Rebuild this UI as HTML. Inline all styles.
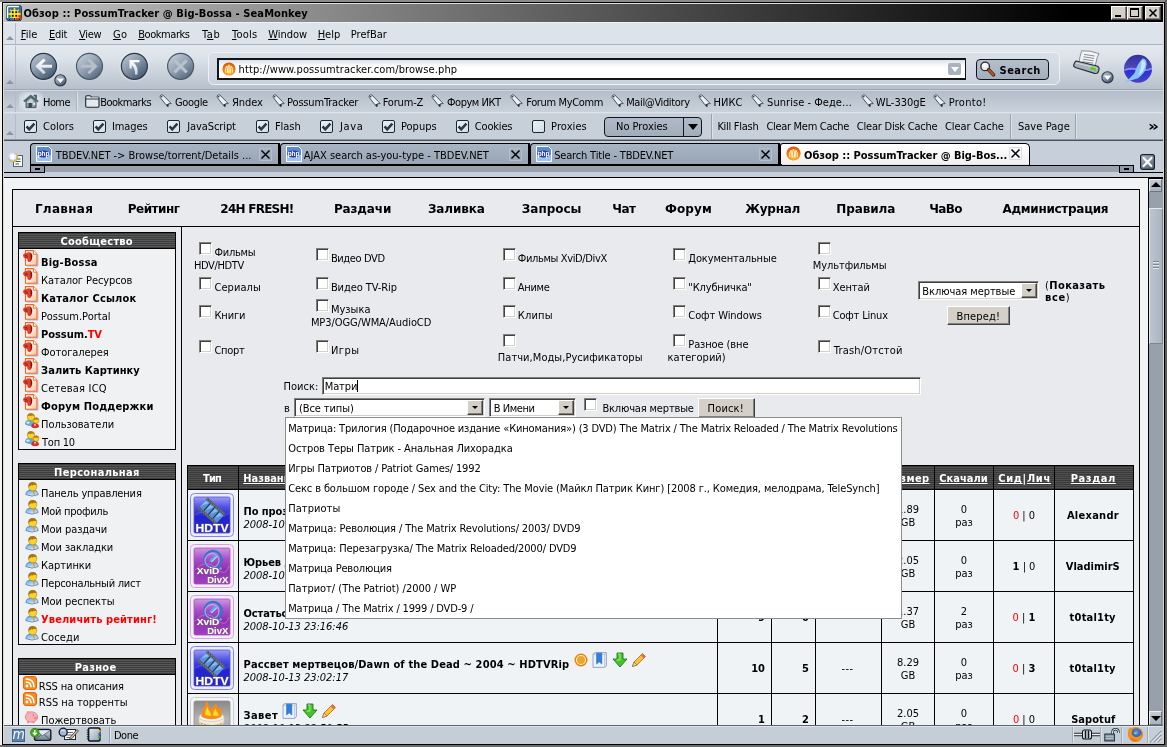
<!DOCTYPE html>
<html lang="ru">
<head>
<meta charset="utf-8">
<title>Обзор :: PossumTracker @ Big-Bossa - SeaMonkey</title>
<style>
html,body{margin:0;padding:0;}
body{width:1167px;height:747px;overflow:hidden;background:#d4d0c8;position:relative;
 font-family:"DejaVu Sans Condensed","Liberation Sans",sans-serif;font-size:11px;color:#000;}
.abs{position:absolute;}
#win{position:absolute;left:0;top:0;width:1167px;height:747px;overflow:hidden;will-change:transform;}
/* chrome font (Tahoma-like) */
.ui{font-family:"DejaVu Sans Condensed","Liberation Sans",sans-serif;font-size:11px;white-space:nowrap;}
/* page font (Verdana-like) */
.pg{font-family:"DejaVu Sans","Liberation Sans",sans-serif;font-size:11px;}
u{text-decoration:underline;}
*{text-decoration-skip-ink:none;}
/* ---- frame ---- */
#frameTop{left:0;top:0;width:1167px;height:2px;background:#8c8c8c;}
#frameTop2{left:2px;top:2px;width:1163px;height:1px;background:#000;}
#frameL0{left:0;top:2px;width:2px;height:745px;background:#f4f2ee;}
#frameL1{left:2px;top:2px;width:1px;height:745px;background:#000;}
#frameL2{left:3px;top:3px;width:1px;height:741px;background:#dcd8d0;}
#frameR0{left:1163px;top:3px;width:1px;height:742px;background:#dcd8d0;}
#frameR1{left:1164px;top:2px;width:1px;height:745px;background:#000;}
#frameR2{left:1165px;top:0;width:2px;height:747px;background:#5c5c5c;}
#frameB0{left:3px;top:744px;width:1162px;height:1px;background:#000;}
#frameB1{left:0;top:745px;width:1167px;height:2px;background:#6c6c6c;}
#titleHi{left:3px;top:3px;width:1161px;height:1px;background:#e4e0d8;}
#title{left:4px;top:4px;width:1159px;height:18px;background:linear-gradient(to right,#c0c0c0 0,#b4b4b4 8%,#000 92%,#000 100%);}
#titleText{left:23.5px;top:6px;letter-spacing:0.09px;font-weight:bold;font-size:11px;line-height:16px;font-family:"DejaVu Sans Condensed","Liberation Sans",sans-serif;}
.wbtn{width:16px;height:14px;top:6px;background:#d4d0c8;box-sizing:border-box;border:1px solid;border-color:#fff #404040 #404040 #fff;box-shadow:inset -1px -1px 0 #808080;}
#menubar{left:4px;top:22px;width:1159px;height:21px;background:#dde3ea;border-top:1px solid #eef2f6;border-bottom:1px solid #a9b3bf;box-sizing:content-box;}
.mi{top:28px;line-height:14px;height:14px;}
.grip{left:4px;width:11px;border-right:1px solid #b4bcc8;}
.grip i{position:absolute;left:2px;width:0;height:0;border-left:4px solid transparent;border-right:4px solid transparent;border-bottom:4px solid #8c96a2;}
#navbar{left:4px;top:45px;width:1159px;height:44px;background:linear-gradient(to bottom,#e4e9ef 0,#dce2e9 30%,#c4ccd6 75%,#b6c0cb 100%);border-bottom:1px solid #9ea8b4;}
#urlbox{left:217px;top:58px;width:749px;height:22px;box-sizing:border-box;border:2px solid #141414;border-right-width:1px;background:linear-gradient(to bottom,#d8e2ec 0,#f4f7fa 25%,#fff 45%,#fff 100%);}
#searchbtn{left:976px;top:59px;width:73px;height:21px;box-sizing:border-box;border:1px solid #10141a;border-radius:4px;background:linear-gradient(to bottom,#b4becb,#a4afbd);}
#bmbar{left:4px;top:90px;width:1159px;height:23px;background:linear-gradient(to bottom,#b3beca 0,#bcc6d1 40%,#c9d1da 100%);border-top:1px solid #d0d7df;border-bottom:1px solid #dde3ea;box-sizing:border-box;}
.bt{top:96px;line-height:14px;}
#prefbar{left:4px;top:113px;width:1159px;height:27px;background:#c7cfd9;border-top:1px solid #cfd6df;border-bottom:1px solid #8a96a4;box-sizing:border-box;}
.pt{top:120px;line-height:14px;}
.pcb{top:120px;width:13px;height:13px;box-sizing:border-box;border:1px solid #1c2630;border-radius:2px;background:linear-gradient(135deg,#e6f0f4,#d2e0e8);}
.pcb svg{position:absolute;left:0;top:0;}
#noprox{left:604px;top:117px;width:98px;height:20px;box-sizing:border-box;border:1px solid #10161e;border-radius:4px;background:linear-gradient(to bottom,#b0bac8,#a2adbc);}
#noprox div{position:absolute;left:78px;top:0;width:1px;height:18px;background:#10161e;}
#noprox i{position:absolute;left:83px;top:6px;border-left:5px solid transparent;border-right:5px solid transparent;border-top:6px solid #000;}
#tabbar{left:4px;top:141px;width:1159px;height:36px;background:#c7cfda;}
.tab{top:143px;height:21px;box-sizing:border-box;border:1px solid #000;border-right-width:2px;border-bottom:0;border-radius:4px 0 0 0;background:linear-gradient(to bottom,#a8b4c2,#98a5b5);}
.tab.act{background:linear-gradient(to bottom,#fff,#f0f0f0);border-radius:3px 5px 0 0;border-right-width:1px;}
.tt{top:149px;line-height:14px;}
.tclose{top:148px;width:13px;height:13px;box-sizing:border-box;border:1px solid #b4bfcc;border-radius:1px;}
.tclose svg{position:absolute;left:0;top:0;}
.tdd{top:166px;width:15px;height:6px;box-sizing:border-box;border-left:1px solid #000;border-right:1px solid #000;background:#8c9aac;}
.tdd i{position:absolute;left:4px;top:2px;width:5px;height:2px;background:#000;}
.t{font-family:"DejaVu Sans Condensed","Liberation Sans",sans-serif;font-size:11px;line-height:14px;white-space:nowrap;}
.sbh{width:158px;height:16px;box-sizing:border-box;border:1px solid #000;border-bottom:0;background:repeating-linear-gradient(to bottom,#3c3c3c 0,#3c3c3c 1px,#585858 1px,#585858 2px);}
.sbb{width:158px;box-sizing:border-box;border:1px solid #000;background:#f0f1f3;}
.cb{width:13px;height:13px;box-sizing:border-box;border:1px solid;border-color:#808080 #fff #fff #808080;background:#fff;box-shadow:inset 1px 1px 0 #404040,inset -1px -1px 0 #d4d0c8;}
.sel{box-sizing:border-box;border:1px solid;border-color:#808080 #fff #fff #808080;background:#fff;box-shadow:inset 1px 1px 0 #404040,inset -1px -1px 0 #d4d0c8;}
.sel b{position:absolute;right:1px;top:1px;width:16px;height:15px;box-sizing:border-box;background:#d4d0c8;border:1px solid;border-color:#fff #404040 #404040 #fff;box-shadow:inset -1px -1px 0 #808080;}
.sel b:after{content:"";position:absolute;left:4px;top:5px;border-left:3px solid transparent;border-right:3px solid transparent;border-top:3px solid #000;}
.btn{box-sizing:border-box;background:#d4d0c8;border:1px solid;border-color:#fff #404040 #404040 #fff;box-shadow:inset -1px -1px 0 #808080;}
.inp{box-sizing:border-box;border:1px solid;border-color:#808080 #fff #fff #808080;background:#fff;box-shadow:inset 1px 1px 0 #404040,inset -1px -1px 0 #d4d0c8;}
.thd{background:repeating-linear-gradient(to bottom,#3a3a3a 0,#3a3a3a 1px,#505050 1px,#505050 2px);}
.sbtn{width:13px;height:13px;box-sizing:border-box;border:1px solid;border-color:#e8ecf0 #6c7682 #6c7682 #e8ecf0;background:linear-gradient(to bottom,#c4ccd6,#a8b2be);}
.sbtn i{position:absolute;left:1px;width:0;height:0;border-left:5px solid transparent;border-right:5px solid transparent;}
.sbtn i.up{top:2px;border-bottom:5px solid #000;}
.sbtn i.dn{top:4px;border-top:5px solid #000;}
#statusbar{left:4px;top:726px;width:1159px;height:18px;background:#c5cdd7;border-top:1px solid #dde4eb;box-sizing:border-box;}
.vs{top:727px;width:1px;height:16px;background:#a2acb8;border-right:1px solid #dde3ea;}

</style>
</head>
<body>
<div id="win">
<!-- window frame -->
<div class="abs" id="frameTop"></div>
<div class="abs" id="frameL0"></div>
<div class="abs" id="frameTop2"></div>
<div class="abs" id="frameL1"></div>
<div class="abs" id="frameL2"></div>
<div class="abs" id="frameR0"></div>
<div class="abs" id="frameR1"></div>
<div class="abs" id="frameR2"></div>
<div class="abs" id="titleHi"></div>
<div class="abs" id="title"></div>
<div class="abs ui" id="titleText">Обзор :: PossumTracker @ Big-Bossa - SeaMonkey</div>
<svg class="abs" style="left:6px;top:5px" width="16" height="16" viewBox="0 0 16 16">
 <rect x="0.5" y="0.5" width="15" height="15" rx="2" fill="#3a6ea0" stroke="#1c4a70"/>
 <path d="M1.5 13 V3 Q1.5 1.5 3 1.5 H13" fill="none" stroke="#fff" stroke-width="1.4"/>
 <rect x="8" y="7" width="7" height="8" fill="#e03c10"/>
 <circle cx="8.5" cy="9" r="4.2" fill="#ffee20"/>
 <path d="M8.5 3 V15 M2.5 9 H14.5 M4.2 4.7 L12.8 13.3 M12.8 4.7 L4.2 13.3" stroke="#ffe820" stroke-width="1.3"/>
 <path d="M5.8 6.2h2v2h-2zM9.2 6.2h2v2h-2zM5.8 9.8h2v2h-2zM9.2 9.8h2v2h-2z" fill="#181000"/><path d="M8.5 3 V15 M2.5 9 H14.5" stroke="#ffee20" stroke-width="1.2"/><path d="M12.5 13.5 L14.5 15.5 M4.5 13.5 L2.5 15.5 M8.5 13 V15.5" stroke="#100800" stroke-width="0.9"/>
</svg>
<div class="abs wbtn" style="left:1111px"><div class="abs" style="left:3px;top:8px;width:6px;height:2px;background:#000"></div></div>
<div class="abs wbtn" style="left:1127px"><div class="abs" style="left:2px;top:1px;width:9px;height:9px;box-sizing:border-box;border:1px solid #000;border-top-width:2px"></div></div>
<div class="abs wbtn" style="left:1145px"><svg class="abs" style="left:2px;top:1px" width="10" height="10" viewBox="0 0 10 10"><path d="M1.5 1.5 L8.5 8.5 M8.5 1.5 L1.5 8.5" stroke="#000" stroke-width="1.6"/></svg></div>

<div class="abs" id="menubar"></div>
<div class="abs grip" style="top:23px;height:21px"><i style="top:13px"></i></div>
<div class="abs ui mi" style="left:20.8px;letter-spacing:0.0px"><u>F</u>ile</div>
<div class="abs ui mi" style="left:49.1px;letter-spacing:-0.33px"><u>E</u>dit</div>
<div class="abs ui mi" style="left:79.1px;letter-spacing:-0.36px"><u>V</u>iew</div>
<div class="abs ui mi" style="left:113.0px;letter-spacing:0.23px"><u>G</u>o</div>
<div class="abs ui mi" style="left:138.2px;letter-spacing:-0.44px"><u>B</u>ookmarks</div>
<div class="abs ui mi" style="left:202.1px;letter-spacing:0.51px">T<u>a</u>b</div>
<div class="abs ui mi" style="left:232.1px;letter-spacing:0.22px"><u>T</u>ools</div>
<div class="abs ui mi" style="left:268.2px;letter-spacing:-0.04px"><u>W</u>indow</div>
<div class="abs ui mi" style="left:317.7px;letter-spacing:-0.03px"><u>H</u>elp</div>
<div class="abs ui mi" style="left:350.8px;letter-spacing:-0.0px">PrefBar</div>

<div class="abs" id="navbar"></div>
<div class="abs grip" style="top:46px;height:43px"><i style="top:34px"></i></div>
<svg class="abs" style="left:16px;top:45px" width="1146" height="45" viewBox="16 45 1146 45">
 <defs>
  <linearGradient id="gb" x1="0.15" y1="0.1" x2="0.85" y2="0.95"><stop offset="0" stop-color="#b4bfcc"/><stop offset="0.45" stop-color="#8494a8"/><stop offset="1" stop-color="#40546c"/></linearGradient>
  <linearGradient id="gbd" x1="0.15" y1="0.1" x2="0.85" y2="0.95"><stop offset="0" stop-color="#c0cad5"/><stop offset="0.45" stop-color="#94a2b3"/><stop offset="1" stop-color="#52667e"/></linearGradient>
  <radialGradient id="glow"><stop offset="0.6" stop-color="#e8edf3" stop-opacity="0.9"/><stop offset="1" stop-color="#e8edf3" stop-opacity="0"/></radialGradient>
  <linearGradient id="arw" x1="0" y1="0" x2="0" y2="1"><stop offset="0" stop-color="#fff"/><stop offset="1" stop-color="#d0d8e2"/></linearGradient>
  <linearGradient id="sm" x1="0" y1="0" x2="0" y2="1"><stop offset="0" stop-color="#34309c"/><stop offset="0.46" stop-color="#4c48bc"/><stop offset="0.54" stop-color="#2c2cd8"/><stop offset="1" stop-color="#4844c4"/></linearGradient>
 </defs>
 <!-- back -->
 <circle cx="43.5" cy="66.3" r="16.5" fill="url(#glow)"/>
 <circle cx="43.5" cy="66.3" r="13" fill="url(#gb)" stroke="#2c3846" stroke-width="1.2"/>
 <path d="M50.5 66.3 H39 M43.5 60.5 L37.5 66.3 L43.5 72.2" fill="none" stroke="url(#arw)" stroke-width="3" stroke-linecap="square" stroke-linejoin="miter"/>
 <circle cx="60.4" cy="80.3" r="5.6" fill="url(#gb)" stroke="#2c3846" stroke-width="1.1"/>
 <path d="M56.6 78.4 H64.2 L60.4 83 Z" fill="#fff"/>
 <!-- forward (disabled) -->
 <circle cx="89.5" cy="66.3" r="13" fill="url(#gbd)" stroke="#4a5868" stroke-width="1.2"/>
 <path d="M82.5 66.3 H94 M89.5 60.5 L95.5 66.3 L89.5 72.2" fill="none" stroke="#b4bfcb" stroke-width="3" stroke-linecap="square"/>
 <!-- reload -->
 <circle cx="134.4" cy="66.3" r="16.5" fill="url(#glow)"/>
 <circle cx="134.4" cy="66.3" r="13" fill="url(#gb)" stroke="#2c3846" stroke-width="1.2"/>
 <path d="M129.5 68.5 V60 H139.5 V62.2 H133.5 Q138.5 67 137.5 74.5 H135 Q135.5 69 131.8 65 V68.5 Z" fill="url(#arw)"/>
 <!-- stop (disabled) -->
 <circle cx="180.6" cy="66.3" r="13" fill="url(#gbd)" stroke="#4a5868" stroke-width="1.2"/>
 <path d="M174.5 60.2 L186.7 72.4 M186.7 60.2 L174.5 72.4" stroke="#b8c2cd" stroke-width="3"/>
 <!-- url container -->
 <rect x="208.5" y="52.5" width="851" height="32" rx="5" fill="#d4dbe4" fill-opacity="0.55" stroke="#eef1f5" stroke-width="1"/>
 <!-- printer -->
 <path d="M1081.6 50.8 Q1090 50.2 1099 53.6 Q1096.6 57.6 1096.2 62 L1094.8 67 L1079 63.6 Q1079.6 56.6 1081.6 50.8Z" fill="#f2f4f6" stroke="#7c848c" stroke-width="0.9"/>
 <path d="M1084 54.4 L1094.6 56 M1083.4 56.8 L1094 58.4 M1082.8 59.2 L1093.6 60.8 M1082.4 61.6 L1093.2 63.2" stroke="#6c747c" stroke-width="0.8"/>
 <path d="M1077.4 61.2 L1097 66 Q1099.6 67 1099 69.6 L1098 72.4 Q1097 74 1094.6 73.4 L1075.4 67.6 Q1073 66.4 1073.8 64.4 L1075 62 Q1075.8 60.8 1077.4 61.2Z" fill="#a8b0ba" stroke="#262e38" stroke-width="1.1"/>
 <path d="M1076 63 L1097.6 68.4" stroke="#d4dae0" stroke-width="1"/>
 <rect x="1090.6" y="67.2" width="5.4" height="2.8" fill="#58d020" transform="rotate(14 1093 68.5)"/>
 <circle cx="1107.5" cy="77.3" r="5.6" fill="url(#gb)" stroke="#2c3846" stroke-width="1.1"/>
 <path d="M1103.7 75.4 H1111.3 L1107.5 80 Z" fill="#fff"/>
 <!-- throbber -->
 <circle cx="1138" cy="68.8" r="14" fill="url(#sm)"/>
 <path d="M1124.4 69 Q1131 66.6 1138 68.4 Q1146 70.4 1152 67.6 L1152 69.6 Q1146 72.4 1138 70.4 Q1131 68.6 1124.4 71Z" fill="#8c94f4" opacity="0.9"/>
 <path d="M1124 82.4 Q1130.4 78.6 1134.6 73 Q1137.6 63.4 1142.6 58.6 Q1146.8 58.4 1146.6 64.6 Q1145.8 73.4 1138 78.2 Q1131.6 80.2 1124 82.4Z" fill="#86c4f8"/>
 <path d="M1141.6 60.4 Q1145.2 59.6 1145.4 64.2 Q1144.4 71 1138.6 75.6 Q1141.8 68 1141.6 60.4Z" fill="#c8e6ff"/>
</svg>
<div class="abs" id="urlbox"></div>
<svg class="abs" style="left:222px;top:62px" width="14" height="14" viewBox="0 0 14 14">
 <defs><radialGradient id="fav" cx="0.5" cy="0.7" r="0.7"><stop offset="0" stop-color="#ffd040"/><stop offset="0.6" stop-color="#f88010"/><stop offset="1" stop-color="#e04800"/></radialGradient></defs>
 <circle cx="7" cy="7" r="6.6" fill="url(#fav)"/>
 <path d="M3.5 10.5 Q3 5.5 4.8 4 Q5.3 6 5.6 10.5 M5.9 10.8 Q5.8 4 7 2.8 Q8.2 4 8.1 10.8 M8.4 10.5 Q8.7 6 9.2 4 Q11 5.5 10.5 10.5" fill="none" stroke="#fff4d0" stroke-width="0.9"/>
</svg>
<div class="abs ui" style="left:238.6px;top:63px;line-height:14px;letter-spacing:0.11px">http://www.possumtracker.com/browse.php</div>
<div class="abs" style="left:948px;top:63px;width:13px;height:12px;background:#a9b3c0;border-radius:2px"><i class="abs" style="left:3px;top:4px;border-left:4px solid transparent;border-right:4px solid transparent;border-top:5px solid #fff"></i></div>
<div class="abs" id="searchbtn"></div>
<svg class="abs" style="left:979px;top:60px" width="18" height="18" viewBox="0 0 18 18">
 <circle cx="6.2" cy="6.4" r="4.3" fill="#e8ecf0" stroke="#2a2a2a" stroke-width="1.3"/>
 <circle cx="5.4" cy="5.6" r="2" fill="#fff"/>
 <path d="M9.6 9.8 L14.5 14.8" stroke="#2a2a2a" stroke-width="3.6" stroke-linecap="round"/>
 <path d="M10 10.2 L14.4 14.6" stroke="#c85010" stroke-width="2.2" stroke-linecap="round"/>
</svg>
<div class="abs ui" style="left:999.5px;top:64px;line-height:14px;font-weight:bold;letter-spacing:0.5px">Search</div>

<div class="abs" id="bmbar"></div>
<div class="abs grip" style="top:91px;height:21px"><i style="top:13px"></i></div>
<div class="abs" style="left:19px;top:92px;width:24px;height:19px;border-radius:4px;background:radial-gradient(ellipse at center,#dfe5ec 0,#dfe5ec 40%,rgba(223,229,236,0) 100%)"></div>
<svg class="abs" style="left:23px;top:94px" width="17" height="15" viewBox="0 0 17 15"><path d="M10.6 1.6 H13 V5.4" fill="none" stroke="#4a5c64" stroke-width="1.8"/><path d="M0.8 7.6 L7.8 1.8 L15.2 7.8" fill="none" stroke="#566a72" stroke-width="2"/><path d="M3 7 L7.8 3 L13 7.2 V13.6 H3Z" fill="#8a9ea6" stroke="#3c4e56" stroke-width="0.9"/><path d="M4 8 L7.8 4.6 L10 6.6 V9 H4Z" fill="#c8d4d8"/><rect x="5.6" y="9" width="3.2" height="4.6" fill="#34464e"/><rect x="10" y="8.6" width="2.2" height="2.4" fill="#d8e4e8"/></svg>
<div class="abs" style="left:76px;top:92px;width:1px;height:19px;background:#aab2be;border-right:1px solid #dde3ea"></div>
<svg class="abs" style="left:85px;top:95px" width="15" height="13" viewBox="0 0 15 13"><path d="M0.7 2.2 Q0.7 0.7 2 0.7 H5.2 L6.4 2 H13 Q14 2 14 3 V11 Q14 12.2 13 12.2 H2 Q0.7 12.2 0.7 11Z" fill="#e4e9ee" stroke="#1c2430" stroke-width="1.1"/><path d="M1 4 H14" stroke="#1c2430" stroke-width="0.9"/><path d="M6.6 2.2 H13.6" stroke="#fff" stroke-width="0.6"/></svg>
<svg class="abs" style="left:158.9px;top:94px" width="14" height="14" viewBox="0 0 14 14"><path d="M1.2 3.4 V1.8 L2.2 1 H3.8 L10.4 7.6 L12.2 9.6 L9.4 9.8 L9 12.8 L6.8 10.6 L1.2 3.4Z" fill="#eceff3" stroke="#38424e" stroke-width="0.9" stroke-linejoin="round"/><path d="M9.4 9.8 L9 12.8 L7 10.8Z" fill="#1c2630"/><circle cx="2.8" cy="2.8" r="0.7" fill="#10161e"/></svg>
<svg class="abs" style="left:215.9px;top:94px" width="14" height="14" viewBox="0 0 14 14"><path d="M1.2 3.4 V1.8 L2.2 1 H3.8 L10.4 7.6 L12.2 9.6 L9.4 9.8 L9 12.8 L6.8 10.6 L1.2 3.4Z" fill="#eceff3" stroke="#38424e" stroke-width="0.9" stroke-linejoin="round"/><path d="M9.4 9.8 L9 12.8 L7 10.8Z" fill="#1c2630"/><circle cx="2.8" cy="2.8" r="0.7" fill="#10161e"/></svg>
<svg class="abs" style="left:271.5px;top:94px" width="14" height="14" viewBox="0 0 14 14"><path d="M1.2 3.4 V1.8 L2.2 1 H3.8 L10.4 7.6 L12.2 9.6 L9.4 9.8 L9 12.8 L6.8 10.6 L1.2 3.4Z" fill="#eceff3" stroke="#38424e" stroke-width="0.9" stroke-linejoin="round"/><path d="M9.4 9.8 L9 12.8 L7 10.8Z" fill="#1c2630"/><circle cx="2.8" cy="2.8" r="0.7" fill="#10161e"/></svg>
<svg class="abs" style="left:367.5px;top:94px" width="14" height="14" viewBox="0 0 14 14"><path d="M1.2 3.4 V1.8 L2.2 1 H3.8 L10.4 7.6 L12.2 9.6 L9.4 9.8 L9 12.8 L6.8 10.6 L1.2 3.4Z" fill="#eceff3" stroke="#38424e" stroke-width="0.9" stroke-linejoin="round"/><path d="M9.4 9.8 L9 12.8 L7 10.8Z" fill="#1c2630"/><circle cx="2.8" cy="2.8" r="0.7" fill="#10161e"/></svg>
<svg class="abs" style="left:431.2px;top:94px" width="14" height="14" viewBox="0 0 14 14"><path d="M1.2 3.4 V1.8 L2.2 1 H3.8 L10.4 7.6 L12.2 9.6 L9.4 9.8 L9 12.8 L6.8 10.6 L1.2 3.4Z" fill="#eceff3" stroke="#38424e" stroke-width="0.9" stroke-linejoin="round"/><path d="M9.4 9.8 L9 12.8 L7 10.8Z" fill="#1c2630"/><circle cx="2.8" cy="2.8" r="0.7" fill="#10161e"/></svg>
<svg class="abs" style="left:510.1px;top:94px" width="14" height="14" viewBox="0 0 14 14"><path d="M1.2 3.4 V1.8 L2.2 1 H3.8 L10.4 7.6 L12.2 9.6 L9.4 9.8 L9 12.8 L6.8 10.6 L1.2 3.4Z" fill="#eceff3" stroke="#38424e" stroke-width="0.9" stroke-linejoin="round"/><path d="M9.4 9.8 L9 12.8 L7 10.8Z" fill="#1c2630"/><circle cx="2.8" cy="2.8" r="0.7" fill="#10161e"/></svg>
<svg class="abs" style="left:610.9px;top:94px" width="14" height="14" viewBox="0 0 14 14"><path d="M1.2 3.4 V1.8 L2.2 1 H3.8 L10.4 7.6 L12.2 9.6 L9.4 9.8 L9 12.8 L6.8 10.6 L1.2 3.4Z" fill="#eceff3" stroke="#38424e" stroke-width="0.9" stroke-linejoin="round"/><path d="M9.4 9.8 L9 12.8 L7 10.8Z" fill="#1c2630"/><circle cx="2.8" cy="2.8" r="0.7" fill="#10161e"/></svg>
<svg class="abs" style="left:698.3px;top:94px" width="14" height="14" viewBox="0 0 14 14"><path d="M1.2 3.4 V1.8 L2.2 1 H3.8 L10.4 7.6 L12.2 9.6 L9.4 9.8 L9 12.8 L6.8 10.6 L1.2 3.4Z" fill="#eceff3" stroke="#38424e" stroke-width="0.9" stroke-linejoin="round"/><path d="M9.4 9.8 L9 12.8 L7 10.8Z" fill="#1c2630"/><circle cx="2.8" cy="2.8" r="0.7" fill="#10161e"/></svg>
<svg class="abs" style="left:751.0px;top:94px" width="14" height="14" viewBox="0 0 14 14"><path d="M1.2 3.4 V1.8 L2.2 1 H3.8 L10.4 7.6 L12.2 9.6 L9.4 9.8 L9 12.8 L6.8 10.6 L1.2 3.4Z" fill="#eceff3" stroke="#38424e" stroke-width="0.9" stroke-linejoin="round"/><path d="M9.4 9.8 L9 12.8 L7 10.8Z" fill="#1c2630"/><circle cx="2.8" cy="2.8" r="0.7" fill="#10161e"/></svg>
<svg class="abs" style="left:860.5px;top:94px" width="14" height="14" viewBox="0 0 14 14"><path d="M1.2 3.4 V1.8 L2.2 1 H3.8 L10.4 7.6 L12.2 9.6 L9.4 9.8 L9 12.8 L6.8 10.6 L1.2 3.4Z" fill="#eceff3" stroke="#38424e" stroke-width="0.9" stroke-linejoin="round"/><path d="M9.4 9.8 L9 12.8 L7 10.8Z" fill="#1c2630"/><circle cx="2.8" cy="2.8" r="0.7" fill="#10161e"/></svg>
<svg class="abs" style="left:933.4px;top:94px" width="14" height="14" viewBox="0 0 14 14"><path d="M1.2 3.4 V1.8 L2.2 1 H3.8 L10.4 7.6 L12.2 9.6 L9.4 9.8 L9 12.8 L6.8 10.6 L1.2 3.4Z" fill="#eceff3" stroke="#38424e" stroke-width="0.9" stroke-linejoin="round"/><path d="M9.4 9.8 L9 12.8 L7 10.8Z" fill="#1c2630"/><circle cx="2.8" cy="2.8" r="0.7" fill="#10161e"/></svg>
<div class="abs ui bt" style="left:43.1px;letter-spacing:-0.61px">Home</div>
<div class="abs ui bt" style="left:100.2px;letter-spacing:-0.49px">Bookmarks</div>
<div class="abs ui bt" style="left:175.0px;letter-spacing:-0.34px">Google</div>
<div class="abs ui bt" style="left:232.0px;letter-spacing:-0.06px">Яndex</div>
<div class="abs ui bt" style="left:287.1px;letter-spacing:-0.17px">PossumTracker</div>
<div class="abs ui bt" style="left:382.7px;letter-spacing:-0.17px">Forum-Z</div>
<div class="abs ui bt" style="left:447.0px;letter-spacing:-0.47px">Форум ИКТ</div>
<div class="abs ui bt" style="left:526.2px;letter-spacing:-0.35px">Forum MyComm</div>
<div class="abs ui bt" style="left:626.2px;letter-spacing:-0.36px">Mail@Viditory</div>
<div class="abs ui bt" style="left:713.6px;letter-spacing:-0.02px">НИКС</div>
<div class="abs ui bt" style="left:767.1px;letter-spacing:0.04px">Sunrise - Феде…</div>
<div class="abs ui bt" style="left:875.8px;letter-spacing:-0.03px">WL-330gE</div>
<div class="abs ui bt" style="left:948.7px;letter-spacing:0.29px">Pronto!</div>

<div class="abs" id="prefbar"></div>
<div class="abs" style="left:4px;top:140px;width:1159px;height:1px;background:#4a5260"></div>
<div class="abs grip" style="top:114px;height:25px"><i style="top:17px"></i></div>
<div class="abs pcb" style="left:24px"><svg width="11" height="11" viewBox="0 0 11 11"><path d="M1.6 5.4 L4.2 8.4 L9.4 2.6" fill="none" stroke="#2a3846" stroke-width="2.5"/></svg></div>
<div class="abs ui pt" style="left:43.1px;letter-spacing:-0.05px">Colors</div>
<div class="abs pcb" style="left:93px"><svg width="11" height="11" viewBox="0 0 11 11"><path d="M1.6 5.4 L4.2 8.4 L9.4 2.6" fill="none" stroke="#2a3846" stroke-width="2.5"/></svg></div>
<div class="abs ui pt" style="left:112.0px;letter-spacing:-0.12px">Images</div>
<div class="abs pcb" style="left:167px"><svg width="11" height="11" viewBox="0 0 11 11"><path d="M1.6 5.4 L4.2 8.4 L9.4 2.6" fill="none" stroke="#2a3846" stroke-width="2.5"/></svg></div>
<div class="abs ui pt" style="left:187.3px;letter-spacing:-0.1px">JavaScript</div>
<div class="abs pcb" style="left:256px"><svg width="11" height="11" viewBox="0 0 11 11"><path d="M1.6 5.4 L4.2 8.4 L9.4 2.6" fill="none" stroke="#2a3846" stroke-width="2.5"/></svg></div>
<div class="abs ui pt" style="left:275.0px;letter-spacing:-0.07px">Flash</div>
<div class="abs pcb" style="left:320px"><svg width="11" height="11" viewBox="0 0 11 11"><path d="M1.6 5.4 L4.2 8.4 L9.4 2.6" fill="none" stroke="#2a3846" stroke-width="2.5"/></svg></div>
<div class="abs ui pt" style="left:340.0px;letter-spacing:0.62px">Java</div>
<div class="abs pcb" style="left:382px"><svg width="11" height="11" viewBox="0 0 11 11"><path d="M1.6 5.4 L4.2 8.4 L9.4 2.6" fill="none" stroke="#2a3846" stroke-width="2.5"/></svg></div>
<div class="abs ui pt" style="left:401.0px;letter-spacing:-0.01px">Popups</div>
<div class="abs pcb" style="left:456px"><svg width="11" height="11" viewBox="0 0 11 11"><path d="M1.6 5.4 L4.2 8.4 L9.4 2.6" fill="none" stroke="#2a3846" stroke-width="2.5"/></svg></div>
<div class="abs ui pt" style="left:474.8px;letter-spacing:-0.17px">Cookies</div>
<div class="abs pcb" style="left:532px"></div>
<div class="abs ui pt" style="left:551.1px;letter-spacing:0.08px">Proxies</div>
<div class="abs" id="noprox"><div></div><i></i></div>
<div class="abs ui pt" style="left:616.0px;letter-spacing:-0.0px">No Proxies</div>
<div class="abs ui pt" style="left:717.4px;letter-spacing:-0.28px">Kill Flash</div>
<div class="abs ui pt" style="left:766.4px;letter-spacing:-0.3px">Clear Mem Cache</div>
<div class="abs ui pt" style="left:856.8px;letter-spacing:-0.22px">Clear Disk Cache</div>
<div class="abs ui pt" style="left:945.0px;letter-spacing:-0.09px">Clear Cache</div>
<div class="abs ui pt" style="left:1017.9px;letter-spacing:0.06px">Save Page</div>
<div class="abs" style="left:711px;top:114px;width:1px;height:25px;background:#98a2ae;border-right:1px solid #dce2e9"></div>
<div class="abs" style="left:1010px;top:114px;width:1px;height:25px;background:#98a2ae;border-right:1px solid #dce2e9"></div>
<div class="abs" style="left:1075px;top:114px;width:1px;height:25px;background:#98a2ae;border-right:1px solid #dce2e9"></div>
<div class="abs ui" style="left:1148px;top:119px;line-height:14px;font-weight:bold;font-size:14px;transform:scaleX(1.35);transform-origin:0 0">»</div>

<div class="abs" id="tabbar"></div>
<svg class="abs" style="left:6px;top:146px" width="20" height="22" viewBox="0 0 20 22">
<defs><radialGradient id="nt" cx="0.4" cy="0.4" r="0.6"><stop offset="0" stop-color="#fff"/><stop offset="0.55" stop-color="#c8d4f0"/><stop offset="1" stop-color="#c8b040"/></radialGradient></defs>
<rect x="7.5" y="9.5" width="9" height="11" fill="#f4f6f8" stroke="#5a6470" stroke-width="1"/>
<path d="M9.5 13 H14.5 M9.5 15.5 H14.5 M9.5 18 H13" stroke="#3a424c" stroke-width="0.9"/>
<circle cx="7" cy="11" r="5.2" fill="url(#nt)"/>
<path d="M7 7.8 V14.2 M4.2 9.4 L9.8 12.6 M9.8 9.4 L4.2 12.6" stroke="#fff" stroke-width="1.5"/>
</svg>
<div class="abs tab" style="left:30px;width:250px"></div>
<svg class="abs" style="left:36px;top:146px" width="16" height="16" viewBox="0 0 16 16"><path d="M0.5 0.5 H12.5 L15.5 3.5 V15.5 H0.5Z" fill="#5a8ad8" stroke="#fff" stroke-width="1"/><path d="M1 9 H15 V15 H1Z" fill="#9cc4f0"/><ellipse cx="7.6" cy="8" rx="6.2" ry="3.6" fill="#283c9c"/><text x="7.6" y="10.2" font-family="Liberation Sans, sans-serif" font-size="6.5" font-weight="bold" fill="#fff" text-anchor="middle">php</text></svg>
<div class="abs ui tt" style="left:55.7px;letter-spacing:-0.02px">TBDEV.NET -&gt; Browse/torrent/Details ...</div>
<div class="abs tclose" style="left:259px"><svg width="11" height="11" viewBox="0 0 11 11"><path d="M1.5 1.5 L9.5 9.5 M9.5 1.5 L1.5 9.5" stroke="#000" stroke-width="1.5"/></svg></div>
<div class="abs tab" style="left:280px;width:250px"></div>
<svg class="abs" style="left:286px;top:146px" width="16" height="16" viewBox="0 0 16 16"><path d="M0.5 0.5 H12.5 L15.5 3.5 V15.5 H0.5Z" fill="#5a8ad8" stroke="#fff" stroke-width="1"/><path d="M1 9 H15 V15 H1Z" fill="#9cc4f0"/><ellipse cx="7.6" cy="8" rx="6.2" ry="3.6" fill="#283c9c"/><text x="7.6" y="10.2" font-family="Liberation Sans, sans-serif" font-size="6.5" font-weight="bold" fill="#fff" text-anchor="middle">php</text></svg>
<div class="abs ui tt" style="left:303.8px;letter-spacing:-0.01px">AJAX search as-you-type - TBDEV.NET</div>
<div class="abs tclose" style="left:509px"><svg width="11" height="11" viewBox="0 0 11 11"><path d="M1.5 1.5 L9.5 9.5 M9.5 1.5 L1.5 9.5" stroke="#000" stroke-width="1.5"/></svg></div>
<div class="abs tab" style="left:530px;width:250px"></div>
<svg class="abs" style="left:536px;top:146px" width="16" height="16" viewBox="0 0 16 16"><path d="M0.5 0.5 H12.5 L15.5 3.5 V15.5 H0.5Z" fill="#5a8ad8" stroke="#fff" stroke-width="1"/><path d="M1 9 H15 V15 H1Z" fill="#9cc4f0"/><ellipse cx="7.6" cy="8" rx="6.2" ry="3.6" fill="#283c9c"/><text x="7.6" y="10.2" font-family="Liberation Sans, sans-serif" font-size="6.5" font-weight="bold" fill="#fff" text-anchor="middle">php</text></svg>
<div class="abs ui tt" style="left:554.2px;letter-spacing:-0.17px">Search Title - TBDEV.NET</div>
<div class="abs tclose" style="left:759px"><svg width="11" height="11" viewBox="0 0 11 11"><path d="M1.5 1.5 L9.5 9.5 M9.5 1.5 L1.5 9.5" stroke="#000" stroke-width="1.5"/></svg></div>
<div class="abs tab act" style="left:780px;width:250px"></div>
<svg class="abs" style="left:786px;top:146px" width="15" height="15" viewBox="0 0 14 14"><circle cx="7" cy="7" r="6.6" fill="url(#fav)"/><path d="M3.5 10.5 Q3 5.5 4.8 4 Q5.3 6 5.6 10.5 M5.9 10.8 Q5.8 4 7 2.8 Q8.2 4 8.1 10.8 M8.4 10.5 Q8.7 6 9.2 4 Q11 5.5 10.5 10.5" fill="none" stroke="#fff4d0" stroke-width="0.9"/></svg>
<div class="abs ui tt" style="left:804.1px;top:149px;font-weight:bold;letter-spacing:-0.03px">Обзор :: PossumTracker @ Big-Bos...</div>
<div class="abs tclose" style="left:1009px;top:147px;border-color:#d8dce0;background:#fafafa"><svg width="11" height="11" viewBox="0 0 11 11"><path d="M1.5 1.5 L9.5 9.5 M9.5 1.5 L1.5 9.5" stroke="#000" stroke-width="1.5"/></svg></div>
<div class="abs" style="left:30px;top:164px;width:1000px;height:2px;background:#000"></div>
<div class="abs" style="left:1030px;top:165px;width:104px;height:1px;background:#000"></div>
<div class="abs" style="left:782px;top:164px;width:247px;height:1px;background:#e0e2e5"></div>
<div class="abs" style="left:30px;top:166px;width:1104px;height:6px;background:#9aa2ad"></div>
<div class="abs" style="left:4px;top:172px;width:41px;height:1px;background:#000"></div>
<div class="abs" style="left:1119px;top:172px;width:44px;height:1px;background:#000"></div>
<div class="abs tdd" style="left:30px"><i></i></div>
<div class="abs tdd" style="left:1119px"><i></i></div>
<div class="abs" style="left:4px;top:177px;width:1159px;height:1px;background:#000"></div>
<svg class="abs" style="left:1140px;top:154px" width="15" height="16" viewBox="0 0 15 16"><defs><linearGradient id="cx" x1="0" y1="0" x2="0.6" y2="1"><stop offset="0" stop-color="#b4bec9"/><stop offset="1" stop-color="#56687c"/></linearGradient></defs><rect x="0.6" y="0.6" width="13.8" height="14.8" rx="2" fill="url(#cx)" stroke="#18202a" stroke-width="1.2"/><path d="M3.6 4 L11.4 12 M11.4 4 L3.6 12" stroke="#fff" stroke-width="2.2" stroke-linecap="round"/></svg>

<div class="abs" style="left:4px;top:178px;width:1145px;height:548px;background:#f2f3f5;"></div>
<div class="abs" style="left:12px;top:189px;width:1128px;height:545px;box-sizing:border-box;border:1px solid #000;background:#e8eaee"></div>
<div class="abs" style="left:13px;top:226px;width:1126px;height:1px;background:#000;"></div>
<div class="abs" style="left:181px;top:227px;width:1px;height:499px;background:#000;"></div>
<div class="abs t " style="left:34.9px;top:202px;letter-spacing:0.3px;font-weight:bold;font-size:12px;font-family:'DejaVu Sans',sans-serif;">Главная</div>
<div class="abs t " style="left:127.7px;top:202px;letter-spacing:-0.48px;font-weight:bold;font-size:12px;font-family:'DejaVu Sans',sans-serif;">Рейтинг</div>
<div class="abs t " style="left:220.3px;top:202px;letter-spacing:-0.75px;font-weight:bold;font-size:12px;font-family:'DejaVu Sans',sans-serif;">24H FRESH!</div>
<div class="abs t " style="left:333.9px;top:202px;letter-spacing:-0.15px;font-weight:bold;font-size:12px;font-family:'DejaVu Sans',sans-serif;">Раздачи</div>
<div class="abs t " style="left:427.9px;top:202px;letter-spacing:-0.13px;font-weight:bold;font-size:12px;font-family:'DejaVu Sans',sans-serif;">Заливка</div>
<div class="abs t " style="left:521.8px;top:202px;letter-spacing:-0.01px;font-weight:bold;font-size:12px;font-family:'DejaVu Sans',sans-serif;">Запросы</div>
<div class="abs t " style="left:612.3px;top:202px;letter-spacing:-0.6px;font-weight:bold;font-size:12px;font-family:'DejaVu Sans',sans-serif;">Чат</div>
<div class="abs t " style="left:665.0px;top:202px;letter-spacing:0.09px;font-weight:bold;font-size:12px;font-family:'DejaVu Sans',sans-serif;">Форум</div>
<div class="abs t " style="left:745.2px;top:202px;letter-spacing:-0.22px;font-weight:bold;font-size:12px;font-family:'DejaVu Sans',sans-serif;">Журнал</div>
<div class="abs t " style="left:836.2px;top:202px;letter-spacing:-0.07px;font-weight:bold;font-size:12px;font-family:'DejaVu Sans',sans-serif;">Правила</div>
<div class="abs t " style="left:929.3px;top:202px;letter-spacing:-0.65px;font-weight:bold;font-size:12px;font-family:'DejaVu Sans',sans-serif;">ЧаВо</div>
<div class="abs t " style="left:1002.4px;top:202px;letter-spacing:-0.29px;font-weight:bold;font-size:12px;font-family:'DejaVu Sans',sans-serif;">Администрация</div>
<div class="abs sbh" style="left:18px;top:232px"></div>
<div class="abs t " style="left:60.5px;top:235px;letter-spacing:0.23px;font-weight:bold;color:#fff;">Сообщество</div>
<div class="abs sbb" style="left:18px;top:248px;height:202px"></div>
<svg class="abs" style="left:22px;top:249px" width="17" height="18" viewBox="0 0 17 18"><path d="M3.5 1.6 H11.4 L15 5.2 V16.3 H3.5Z" fill="url(#gdoc)" stroke="#f06424" stroke-width="1.1"/><path d="M11.4 1.6 V5.2 H15" fill="#fff6ee" stroke="#f06424" stroke-width="0.9"/><path d="M16 6 V17.2 H5" fill="none" stroke="#90a0a8" stroke-width="0.8" opacity="0.6"/><path d="M1 6.2 Q1.6 3.8 4.2 4.2 Q6 2.6 8.6 3.6 Q10.6 4.8 10.4 8 Q10.2 11 8.4 12.8 Q6.2 13.6 5.4 11.4 Q5.6 9.8 4.4 9.4 Q1.6 9.6 1 6.2Z" fill="#e4402a"/><path d="M8.6 4 Q10.4 5.6 10 8.6 Q9.6 11 8.2 12.4 Q9 9.6 8.6 7.6 Q8.4 5.6 8.6 4Z" fill="#5a1c14"/><path d="M2.6 6.6 Q3.8 5.8 5 6.6 M3 8 Q4.6 8.4 6 7.6" fill="none" stroke="#7a2016" stroke-width="0.8"/></svg>
<div class="abs t " style="left:41.1px;top:256px;letter-spacing:0.17px;font-weight:bold;">Big-Bossa</div>
<svg class="abs" style="left:22px;top:267px" width="17" height="18" viewBox="0 0 17 18"><path d="M3.5 1.6 H11.4 L15 5.2 V16.3 H3.5Z" fill="url(#gdoc)" stroke="#f06424" stroke-width="1.1"/><path d="M11.4 1.6 V5.2 H15" fill="#fff6ee" stroke="#f06424" stroke-width="0.9"/><path d="M16 6 V17.2 H5" fill="none" stroke="#90a0a8" stroke-width="0.8" opacity="0.6"/><path d="M1 6.2 Q1.6 3.8 4.2 4.2 Q6 2.6 8.6 3.6 Q10.6 4.8 10.4 8 Q10.2 11 8.4 12.8 Q6.2 13.6 5.4 11.4 Q5.6 9.8 4.4 9.4 Q1.6 9.6 1 6.2Z" fill="#e4402a"/><path d="M8.6 4 Q10.4 5.6 10 8.6 Q9.6 11 8.2 12.4 Q9 9.6 8.6 7.6 Q8.4 5.6 8.6 4Z" fill="#5a1c14"/><path d="M2.6 6.6 Q3.8 5.8 5 6.6 M3 8 Q4.6 8.4 6 7.6" fill="none" stroke="#7a2016" stroke-width="0.8"/></svg>
<div class="abs t " style="left:41.1px;top:274px;letter-spacing:-0.09px;">Каталог Ресурсов</div>
<svg class="abs" style="left:22px;top:285px" width="17" height="18" viewBox="0 0 17 18"><path d="M3.5 1.6 H11.4 L15 5.2 V16.3 H3.5Z" fill="url(#gdoc)" stroke="#f06424" stroke-width="1.1"/><path d="M11.4 1.6 V5.2 H15" fill="#fff6ee" stroke="#f06424" stroke-width="0.9"/><path d="M16 6 V17.2 H5" fill="none" stroke="#90a0a8" stroke-width="0.8" opacity="0.6"/><path d="M1 6.2 Q1.6 3.8 4.2 4.2 Q6 2.6 8.6 3.6 Q10.6 4.8 10.4 8 Q10.2 11 8.4 12.8 Q6.2 13.6 5.4 11.4 Q5.6 9.8 4.4 9.4 Q1.6 9.6 1 6.2Z" fill="#e4402a"/><path d="M8.6 4 Q10.4 5.6 10 8.6 Q9.6 11 8.2 12.4 Q9 9.6 8.6 7.6 Q8.4 5.6 8.6 4Z" fill="#5a1c14"/><path d="M2.6 6.6 Q3.8 5.8 5 6.6 M3 8 Q4.6 8.4 6 7.6" fill="none" stroke="#7a2016" stroke-width="0.8"/></svg>
<div class="abs t " style="left:41.1px;top:292px;letter-spacing:0.19px;font-weight:bold;">Каталог Ссылок</div>
<svg class="abs" style="left:22px;top:303px" width="17" height="18" viewBox="0 0 17 18"><path d="M3.5 1.6 H11.4 L15 5.2 V16.3 H3.5Z" fill="url(#gdoc)" stroke="#f06424" stroke-width="1.1"/><path d="M11.4 1.6 V5.2 H15" fill="#fff6ee" stroke="#f06424" stroke-width="0.9"/><path d="M16 6 V17.2 H5" fill="none" stroke="#90a0a8" stroke-width="0.8" opacity="0.6"/><path d="M1 6.2 Q1.6 3.8 4.2 4.2 Q6 2.6 8.6 3.6 Q10.6 4.8 10.4 8 Q10.2 11 8.4 12.8 Q6.2 13.6 5.4 11.4 Q5.6 9.8 4.4 9.4 Q1.6 9.6 1 6.2Z" fill="#e4402a"/><path d="M8.6 4 Q10.4 5.6 10 8.6 Q9.6 11 8.2 12.4 Q9 9.6 8.6 7.6 Q8.4 5.6 8.6 4Z" fill="#5a1c14"/><path d="M2.6 6.6 Q3.8 5.8 5 6.6 M3 8 Q4.6 8.4 6 7.6" fill="none" stroke="#7a2016" stroke-width="0.8"/></svg>
<div class="abs t " style="left:41.1px;top:310px;">Possum.Portal</div>
<svg class="abs" style="left:22px;top:321px" width="17" height="18" viewBox="0 0 17 18"><path d="M3.5 1.6 H11.4 L15 5.2 V16.3 H3.5Z" fill="url(#gdoc)" stroke="#f06424" stroke-width="1.1"/><path d="M11.4 1.6 V5.2 H15" fill="#fff6ee" stroke="#f06424" stroke-width="0.9"/><path d="M16 6 V17.2 H5" fill="none" stroke="#90a0a8" stroke-width="0.8" opacity="0.6"/><path d="M1 6.2 Q1.6 3.8 4.2 4.2 Q6 2.6 8.6 3.6 Q10.6 4.8 10.4 8 Q10.2 11 8.4 12.8 Q6.2 13.6 5.4 11.4 Q5.6 9.8 4.4 9.4 Q1.6 9.6 1 6.2Z" fill="#e4402a"/><path d="M8.6 4 Q10.4 5.6 10 8.6 Q9.6 11 8.2 12.4 Q9 9.6 8.6 7.6 Q8.4 5.6 8.6 4Z" fill="#5a1c14"/><path d="M2.6 6.6 Q3.8 5.8 5 6.6 M3 8 Q4.6 8.4 6 7.6" fill="none" stroke="#7a2016" stroke-width="0.8"/></svg>
<div class="abs t " style="left:41.1px;top:328px;letter-spacing:-0.06px;font-weight:bold;">Possum.<span style="color:#ff0000">TV</span></div>
<svg class="abs" style="left:22px;top:339px" width="17" height="18" viewBox="0 0 17 18"><path d="M3.5 1.6 H11.4 L15 5.2 V16.3 H3.5Z" fill="url(#gdoc)" stroke="#f06424" stroke-width="1.1"/><path d="M11.4 1.6 V5.2 H15" fill="#fff6ee" stroke="#f06424" stroke-width="0.9"/><path d="M16 6 V17.2 H5" fill="none" stroke="#90a0a8" stroke-width="0.8" opacity="0.6"/><path d="M1 6.2 Q1.6 3.8 4.2 4.2 Q6 2.6 8.6 3.6 Q10.6 4.8 10.4 8 Q10.2 11 8.4 12.8 Q6.2 13.6 5.4 11.4 Q5.6 9.8 4.4 9.4 Q1.6 9.6 1 6.2Z" fill="#e4402a"/><path d="M8.6 4 Q10.4 5.6 10 8.6 Q9.6 11 8.2 12.4 Q9 9.6 8.6 7.6 Q8.4 5.6 8.6 4Z" fill="#5a1c14"/><path d="M2.6 6.6 Q3.8 5.8 5 6.6 M3 8 Q4.6 8.4 6 7.6" fill="none" stroke="#7a2016" stroke-width="0.8"/></svg>
<div class="abs t " style="left:41.1px;top:346px;letter-spacing:-0.07px;">Фотогалерея</div>
<svg class="abs" style="left:22px;top:357px" width="17" height="18" viewBox="0 0 17 18"><path d="M3.5 1.6 H11.4 L15 5.2 V16.3 H3.5Z" fill="url(#gdoc)" stroke="#f06424" stroke-width="1.1"/><path d="M11.4 1.6 V5.2 H15" fill="#fff6ee" stroke="#f06424" stroke-width="0.9"/><path d="M16 6 V17.2 H5" fill="none" stroke="#90a0a8" stroke-width="0.8" opacity="0.6"/><path d="M1 6.2 Q1.6 3.8 4.2 4.2 Q6 2.6 8.6 3.6 Q10.6 4.8 10.4 8 Q10.2 11 8.4 12.8 Q6.2 13.6 5.4 11.4 Q5.6 9.8 4.4 9.4 Q1.6 9.6 1 6.2Z" fill="#e4402a"/><path d="M8.6 4 Q10.4 5.6 10 8.6 Q9.6 11 8.2 12.4 Q9 9.6 8.6 7.6 Q8.4 5.6 8.6 4Z" fill="#5a1c14"/><path d="M2.6 6.6 Q3.8 5.8 5 6.6 M3 8 Q4.6 8.4 6 7.6" fill="none" stroke="#7a2016" stroke-width="0.8"/></svg>
<div class="abs t " style="left:41.1px;top:364px;letter-spacing:0.06px;font-weight:bold;">Залить Картинку</div>
<svg class="abs" style="left:22px;top:375px" width="17" height="18" viewBox="0 0 17 18"><path d="M3.5 1.6 H11.4 L15 5.2 V16.3 H3.5Z" fill="url(#gdoc)" stroke="#f06424" stroke-width="1.1"/><path d="M11.4 1.6 V5.2 H15" fill="#fff6ee" stroke="#f06424" stroke-width="0.9"/><path d="M16 6 V17.2 H5" fill="none" stroke="#90a0a8" stroke-width="0.8" opacity="0.6"/><path d="M1 6.2 Q1.6 3.8 4.2 4.2 Q6 2.6 8.6 3.6 Q10.6 4.8 10.4 8 Q10.2 11 8.4 12.8 Q6.2 13.6 5.4 11.4 Q5.6 9.8 4.4 9.4 Q1.6 9.6 1 6.2Z" fill="#e4402a"/><path d="M8.6 4 Q10.4 5.6 10 8.6 Q9.6 11 8.2 12.4 Q9 9.6 8.6 7.6 Q8.4 5.6 8.6 4Z" fill="#5a1c14"/><path d="M2.6 6.6 Q3.8 5.8 5 6.6 M3 8 Q4.6 8.4 6 7.6" fill="none" stroke="#7a2016" stroke-width="0.8"/></svg>
<div class="abs t " style="left:41.1px;top:382px;letter-spacing:0.2px;">Сетевая ICQ</div>
<svg class="abs" style="left:22px;top:393px" width="17" height="18" viewBox="0 0 17 18"><path d="M3.5 1.6 H11.4 L15 5.2 V16.3 H3.5Z" fill="url(#gdoc)" stroke="#f06424" stroke-width="1.1"/><path d="M11.4 1.6 V5.2 H15" fill="#fff6ee" stroke="#f06424" stroke-width="0.9"/><path d="M16 6 V17.2 H5" fill="none" stroke="#90a0a8" stroke-width="0.8" opacity="0.6"/><path d="M1 6.2 Q1.6 3.8 4.2 4.2 Q6 2.6 8.6 3.6 Q10.6 4.8 10.4 8 Q10.2 11 8.4 12.8 Q6.2 13.6 5.4 11.4 Q5.6 9.8 4.4 9.4 Q1.6 9.6 1 6.2Z" fill="#e4402a"/><path d="M8.6 4 Q10.4 5.6 10 8.6 Q9.6 11 8.2 12.4 Q9 9.6 8.6 7.6 Q8.4 5.6 8.6 4Z" fill="#5a1c14"/><path d="M2.6 6.6 Q3.8 5.8 5 6.6 M3 8 Q4.6 8.4 6 7.6" fill="none" stroke="#7a2016" stroke-width="0.8"/></svg>
<div class="abs t " style="left:41.1px;top:400px;letter-spacing:0.16px;font-weight:bold;">Форум Поддержки</div>
<svg class="abs" style="left:25px;top:413px" width="15" height="16" viewBox="0 0 15 16"><path d="M0.4 11.2 Q0.6 7 4 7 H7.4 Q9 7.4 8.6 12 Q4 13.6 0.4 11.2Z" fill="#58acf0" stroke="#6a7c94" stroke-width="0.5"/><ellipse cx="3" cy="9.6" rx="1.6" ry="1.2" fill="#d8f0ff"/><circle cx="5.9" cy="4" r="3.7" fill="#f8d428" stroke="#a87818" stroke-width="0.5"/><path d="M2.4 3.4 Q3 0 6.6 0.4 Q9.6 1 9.4 3.2 Q7.4 1.8 5.6 3 Q4 2.4 2.4 3.4Z" fill="#b07c18"/><path d="M6.4 7.2 L7.4 10.8 L8.2 7.2Z" fill="#f09020"/><path d="M6.6 14 Q6.4 10.2 10 10.2 Q13.8 10.2 13.6 14 Q10 15.8 6.6 14Z" fill="#e42c24" stroke="#a81c14" stroke-width="0.5"/><path d="M9 11.2 L10 13.6 L11 11.2" fill="#fff0f0"/><circle cx="11.2" cy="7.6" r="2.8" fill="#f8d428" stroke="#a87818" stroke-width="0.5"/><path d="M8.6 7 Q9.2 4.4 11.6 4.6 Q13.8 5 13.8 7 Q12.2 6 11 6.8 Q9.8 6.4 8.6 7Z" fill="#b07c18"/></svg>
<div class="abs t " style="left:41.1px;top:418px;letter-spacing:-0.04px;">Пользователи</div>
<svg class="abs" style="left:25px;top:431px" width="15" height="16" viewBox="0 0 15 16"><path d="M0.4 11.2 Q0.6 7 4 7 H7.4 Q9 7.4 8.6 12 Q4 13.6 0.4 11.2Z" fill="#58acf0" stroke="#6a7c94" stroke-width="0.5"/><ellipse cx="3" cy="9.6" rx="1.6" ry="1.2" fill="#d8f0ff"/><circle cx="5.9" cy="4" r="3.7" fill="#f8d428" stroke="#a87818" stroke-width="0.5"/><path d="M2.4 3.4 Q3 0 6.6 0.4 Q9.6 1 9.4 3.2 Q7.4 1.8 5.6 3 Q4 2.4 2.4 3.4Z" fill="#b07c18"/><path d="M6.4 7.2 L7.4 10.8 L8.2 7.2Z" fill="#f09020"/><path d="M6.6 14 Q6.4 10.2 10 10.2 Q13.8 10.2 13.6 14 Q10 15.8 6.6 14Z" fill="#e42c24" stroke="#a81c14" stroke-width="0.5"/><path d="M9 11.2 L10 13.6 L11 11.2" fill="#fff0f0"/><circle cx="11.2" cy="7.6" r="2.8" fill="#f8d428" stroke="#a87818" stroke-width="0.5"/><path d="M8.6 7 Q9.2 4.4 11.6 4.6 Q13.8 5 13.8 7 Q12.2 6 11 6.8 Q9.8 6.4 8.6 7Z" fill="#b07c18"/></svg>
<div class="abs t " style="left:42.1px;top:436px;letter-spacing:-0.28px;">Топ 10</div>
<div class="abs sbh" style="left:18px;top:463px"></div>
<div class="abs t " style="left:54.1px;top:466px;letter-spacing:0.33px;font-weight:bold;color:#fff;">Персональная</div>
<div class="abs sbb" style="left:18px;top:479px;height:166px"></div>
<svg class="abs" style="left:25px;top:481px" width="14" height="16" viewBox="0 0 14 16"><path d="M0.8 13.6 Q1.4 9 6 8.8 H8.4 Q12.6 9 13.2 13.6 Q7 16.6 0.8 13.6Z" fill="url(#gusr)" stroke="#5c7ca8" stroke-width="0.8"/><path d="M8 9.2 L8.4 13.6 L9.4 14.2 L9.8 9.2Z" fill="#f09020"/><circle cx="7.7" cy="5.6" r="4.2" fill="#f8d428" stroke="#a87818" stroke-width="0.5"/><path d="M3.6 6.4 Q2.6 1.4 7.4 1 Q11.6 1 11.8 4.4 Q9.6 3 7.6 4.4 Q5.2 3.8 3.6 6.4Z" fill="#a87418"/></svg>
<div class="abs t " style="left:41.1px;top:487px;letter-spacing:-0.15px;">Панель управления</div>
<svg class="abs" style="left:25px;top:499px" width="14" height="16" viewBox="0 0 14 16"><path d="M0.8 13.6 Q1.4 9 6 8.8 H8.4 Q12.6 9 13.2 13.6 Q7 16.6 0.8 13.6Z" fill="url(#gusr)" stroke="#5c7ca8" stroke-width="0.8"/><path d="M8 9.2 L8.4 13.6 L9.4 14.2 L9.8 9.2Z" fill="#f09020"/><circle cx="7.7" cy="5.6" r="4.2" fill="#f8d428" stroke="#a87818" stroke-width="0.5"/><path d="M3.6 6.4 Q2.6 1.4 7.4 1 Q11.6 1 11.8 4.4 Q9.6 3 7.6 4.4 Q5.2 3.8 3.6 6.4Z" fill="#a87418"/></svg>
<div class="abs t " style="left:41.1px;top:505px;letter-spacing:-0.29px;">Мой профиль</div>
<svg class="abs" style="left:25px;top:517px" width="14" height="16" viewBox="0 0 14 16"><path d="M0.8 13.6 Q1.4 9 6 8.8 H8.4 Q12.6 9 13.2 13.6 Q7 16.6 0.8 13.6Z" fill="url(#gusr)" stroke="#5c7ca8" stroke-width="0.8"/><path d="M8 9.2 L8.4 13.6 L9.4 14.2 L9.8 9.2Z" fill="#f09020"/><circle cx="7.7" cy="5.6" r="4.2" fill="#f8d428" stroke="#a87818" stroke-width="0.5"/><path d="M3.6 6.4 Q2.6 1.4 7.4 1 Q11.6 1 11.8 4.4 Q9.6 3 7.6 4.4 Q5.2 3.8 3.6 6.4Z" fill="#a87418"/></svg>
<div class="abs t " style="left:41.1px;top:523px;letter-spacing:-0.08px;">Мои раздачи</div>
<svg class="abs" style="left:25px;top:535px" width="14" height="16" viewBox="0 0 14 16"><path d="M0.8 13.6 Q1.4 9 6 8.8 H8.4 Q12.6 9 13.2 13.6 Q7 16.6 0.8 13.6Z" fill="url(#gusr)" stroke="#5c7ca8" stroke-width="0.8"/><path d="M8 9.2 L8.4 13.6 L9.4 14.2 L9.8 9.2Z" fill="#f09020"/><circle cx="7.7" cy="5.6" r="4.2" fill="#f8d428" stroke="#a87818" stroke-width="0.5"/><path d="M3.6 6.4 Q2.6 1.4 7.4 1 Q11.6 1 11.8 4.4 Q9.6 3 7.6 4.4 Q5.2 3.8 3.6 6.4Z" fill="#a87418"/></svg>
<div class="abs t " style="left:41.1px;top:541px;letter-spacing:-0.09px;">Мои закладки</div>
<svg class="abs" style="left:25px;top:553px" width="14" height="16" viewBox="0 0 14 16"><path d="M0.8 13.6 Q1.4 9 6 8.8 H8.4 Q12.6 9 13.2 13.6 Q7 16.6 0.8 13.6Z" fill="url(#gusr)" stroke="#5c7ca8" stroke-width="0.8"/><path d="M8 9.2 L8.4 13.6 L9.4 14.2 L9.8 9.2Z" fill="#f09020"/><circle cx="7.7" cy="5.6" r="4.2" fill="#f8d428" stroke="#a87818" stroke-width="0.5"/><path d="M3.6 6.4 Q2.6 1.4 7.4 1 Q11.6 1 11.8 4.4 Q9.6 3 7.6 4.4 Q5.2 3.8 3.6 6.4Z" fill="#a87418"/></svg>
<div class="abs t " style="left:41.1px;top:559px;letter-spacing:-0.05px;">Картинки</div>
<svg class="abs" style="left:25px;top:571px" width="14" height="16" viewBox="0 0 14 16"><path d="M0.8 13.6 Q1.4 9 6 8.8 H8.4 Q12.6 9 13.2 13.6 Q7 16.6 0.8 13.6Z" fill="url(#gusr)" stroke="#5c7ca8" stroke-width="0.8"/><path d="M8 9.2 L8.4 13.6 L9.4 14.2 L9.8 9.2Z" fill="#f09020"/><circle cx="7.7" cy="5.6" r="4.2" fill="#f8d428" stroke="#a87818" stroke-width="0.5"/><path d="M3.6 6.4 Q2.6 1.4 7.4 1 Q11.6 1 11.8 4.4 Q9.6 3 7.6 4.4 Q5.2 3.8 3.6 6.4Z" fill="#a87418"/></svg>
<div class="abs t " style="left:41.1px;top:577px;letter-spacing:-0.25px;">Персональный лист</div>
<svg class="abs" style="left:25px;top:589px" width="14" height="16" viewBox="0 0 14 16"><path d="M0.8 13.6 Q1.4 9 6 8.8 H8.4 Q12.6 9 13.2 13.6 Q7 16.6 0.8 13.6Z" fill="url(#gusr)" stroke="#5c7ca8" stroke-width="0.8"/><path d="M8 9.2 L8.4 13.6 L9.4 14.2 L9.8 9.2Z" fill="#f09020"/><circle cx="7.7" cy="5.6" r="4.2" fill="#f8d428" stroke="#a87818" stroke-width="0.5"/><path d="M3.6 6.4 Q2.6 1.4 7.4 1 Q11.6 1 11.8 4.4 Q9.6 3 7.6 4.4 Q5.2 3.8 3.6 6.4Z" fill="#a87418"/></svg>
<div class="abs t " style="left:41.1px;top:595px;letter-spacing:-0.06px;">Мои респекты</div>
<svg class="abs" style="left:25px;top:607px" width="14" height="16" viewBox="0 0 14 16"><path d="M0.8 13.6 Q1.4 9 6 8.8 H8.4 Q12.6 9 13.2 13.6 Q7 16.6 0.8 13.6Z" fill="url(#gusr)" stroke="#5c7ca8" stroke-width="0.8"/><path d="M8 9.2 L8.4 13.6 L9.4 14.2 L9.8 9.2Z" fill="#f09020"/><circle cx="7.7" cy="5.6" r="4.2" fill="#f8d428" stroke="#a87818" stroke-width="0.5"/><path d="M3.6 6.4 Q2.6 1.4 7.4 1 Q11.6 1 11.8 4.4 Q9.6 3 7.6 4.4 Q5.2 3.8 3.6 6.4Z" fill="#a87418"/></svg>
<div class="abs t " style="left:41.1px;top:613px;letter-spacing:0.1px;font-weight:bold;color:#ff0000;">Увеличить рейтинг!</div>
<svg class="abs" style="left:25px;top:625px" width="14" height="16" viewBox="0 0 14 16"><path d="M0.8 13.6 Q1.4 9 6 8.8 H8.4 Q12.6 9 13.2 13.6 Q7 16.6 0.8 13.6Z" fill="url(#gusr)" stroke="#5c7ca8" stroke-width="0.8"/><path d="M8 9.2 L8.4 13.6 L9.4 14.2 L9.8 9.2Z" fill="#f09020"/><circle cx="7.7" cy="5.6" r="4.2" fill="#f8d428" stroke="#a87818" stroke-width="0.5"/><path d="M3.6 6.4 Q2.6 1.4 7.4 1 Q11.6 1 11.8 4.4 Q9.6 3 7.6 4.4 Q5.2 3.8 3.6 6.4Z" fill="#a87418"/></svg>
<div class="abs t " style="left:41.1px;top:631px;letter-spacing:0.11px;">Соседи</div>
<div class="abs sbh" style="left:18px;top:658px"></div>
<div class="abs t " style="left:74.8px;top:661px;letter-spacing:0.26px;font-weight:bold;color:#fff;">Разное</div>
<div class="abs sbb" style="left:18px;top:674px;height:60px"></div>
<svg class="abs" style="left:23px;top:676px" width="14" height="14" viewBox="0 0 14 14"><rect x="0.5" y="0.5" width="13" height="13" rx="2.5" fill="#f88c20" stroke="#e06808" stroke-width="1"/><circle cx="4" cy="10" r="1.4" fill="#fff"/><path d="M2.8 6 Q8 6 8 11.2 M2.8 3 Q11 3 11 11.2" fill="none" stroke="#fff" stroke-width="1.6"/></svg>
<div class="abs t " style="left:38.8px;top:680px;letter-spacing:-0.17px;">RSS на описания</div>
<svg class="abs" style="left:23px;top:692px" width="14" height="14" viewBox="0 0 14 14"><rect x="0.5" y="0.5" width="13" height="13" rx="2.5" fill="#f88c20" stroke="#e06808" stroke-width="1"/><circle cx="4" cy="10" r="1.4" fill="#fff"/><path d="M2.8 6 Q8 6 8 11.2 M2.8 3 Q11 3 11 11.2" fill="none" stroke="#fff" stroke-width="1.6"/></svg>
<div class="abs t " style="left:38.8px;top:696px;letter-spacing:-0.01px;">RSS на торренты</div>
<svg class="abs" style="left:24px;top:709px" width="15" height="15" viewBox="0 0 15 15"><ellipse cx="7.5" cy="8" rx="6.2" ry="5.2" fill="#f8b0b8" stroke="#e87888" stroke-width="0.8"/><circle cx="4.2" cy="3.6" r="1.6" fill="#f49aa4"/><ellipse cx="11.5" cy="9" rx="1.8" ry="1.5" fill="#f08894"/><path d="M4 12.5 V14.2 M9.5 12.8 V14.2" stroke="#e87888" stroke-width="1.6"/><circle cx="9.4" cy="6" r="0.6" fill="#803040"/></svg>
<div class="abs t " style="left:41.1px;top:714px;letter-spacing:-0.07px;">Пожертвовать</div>
<div class="abs cb" style="left:199px;top:242px"></div>
<div class="abs t " style="left:214.4px;top:246px;letter-spacing:-0.23px;">Фильмы</div>
<div class="abs t " style="left:193.9px;top:259px;letter-spacing:-0.37px;">HDV/HDTV</div>
<div class="abs cb" style="left:199px;top:277px"></div>
<div class="abs t " style="left:214.4px;top:281px;letter-spacing:0.08px;">Сериалы</div>
<div class="abs cb" style="left:199px;top:305px"></div>
<div class="abs t " style="left:214.4px;top:309px;letter-spacing:-0.13px;">Книги</div>
<div class="abs cb" style="left:199px;top:340px"></div>
<div class="abs t " style="left:214.4px;top:344px;letter-spacing:-0.28px;">Спорт</div>
<div class="abs cb" style="left:316px;top:248px"></div>
<div class="abs t " style="left:330.9px;top:252px;letter-spacing:-0.38px;">Видео DVD</div>
<div class="abs cb" style="left:316px;top:277px"></div>
<div class="abs t " style="left:330.9px;top:281px;letter-spacing:-0.08px;">Видео TV-Rip</div>
<div class="abs cb" style="left:316px;top:299px"></div>
<div class="abs t " style="left:330.9px;top:303px;letter-spacing:0.01px;">Музыка</div>
<div class="abs t " style="left:310.9px;top:316px;letter-spacing:-0.07px;">MP3/OGG/WMA/AudioCD</div>
<div class="abs cb" style="left:316px;top:340px"></div>
<div class="abs t " style="left:330.9px;top:344px;letter-spacing:0.47px;">Игры</div>
<div class="abs cb" style="left:503px;top:248px"></div>
<div class="abs t " style="left:517.8px;top:252px;letter-spacing:-0.36px;">Фильмы XviD/DivX</div>
<div class="abs cb" style="left:503px;top:277px"></div>
<div class="abs t " style="left:517.8px;top:281px;letter-spacing:-0.31px;">Аниме</div>
<div class="abs cb" style="left:503px;top:305px"></div>
<div class="abs t " style="left:517.8px;top:309px;letter-spacing:0.16px;">Клипы</div>
<div class="abs cb" style="left:503px;top:334px"></div>
<div class="abs t " style="left:497.8px;top:351px;letter-spacing:0.05px;">Патчи,Моды,Русификаторы</div>
<div class="abs cb" style="left:673px;top:248px"></div>
<div class="abs t " style="left:688.3px;top:252px;letter-spacing:-0.12px;">Документальные</div>
<div class="abs cb" style="left:673px;top:277px"></div>
<div class="abs t " style="left:688.3px;top:281px;letter-spacing:-0.16px;">"Клубничка"</div>
<div class="abs cb" style="left:673px;top:305px"></div>
<div class="abs t " style="left:688.3px;top:309px;letter-spacing:-0.08px;">Софт Windows</div>
<div class="abs cb" style="left:673px;top:334px"></div>
<div class="abs t " style="left:688.3px;top:338px;letter-spacing:-0.11px;">Разное (вне</div>
<div class="abs t " style="left:667.4px;top:351px;letter-spacing:0.01px;">категорий)</div>
<div class="abs cb" style="left:818px;top:242px"></div>
<div class="abs t " style="left:812.8px;top:259px;letter-spacing:-0.09px;">Мультфильмы</div>
<div class="abs cb" style="left:818px;top:277px"></div>
<div class="abs t " style="left:832.8px;top:281px;letter-spacing:-0.11px;">Хентай</div>
<div class="abs cb" style="left:818px;top:305px"></div>
<div class="abs t " style="left:832.8px;top:309px;letter-spacing:-0.2px;">Софт Linux</div>
<div class="abs cb" style="left:818px;top:340px"></div>
<div class="abs t " style="left:833.8px;top:344px;letter-spacing:0.19px;">Trash/Отстой</div>
<div class="abs sel" style="left:918px;top:281px;width:121px;height:19px"><b></b></div>
<div class="abs t " style="left:922.3px;top:285px;letter-spacing:-0.06px;">Включая мертвые</div>
<div class="abs t " style="left:1045.1px;top:279px;letter-spacing:0.38px;font-weight:bold;"><span style="font-weight:normal">(</span>Показать</div>
<div class="abs t " style="left:1045.1px;top:291px;letter-spacing:0.62px;font-weight:bold;">все<span style="font-weight:normal">)</span></div>
<div class="abs btn" style="left:947px;top:306px;width:63px;height:19px"></div>
<div class="abs t " style="left:956.5px;top:310px;letter-spacing:0.14px;">Вперед!</div>
<div class="abs t " style="left:283.5px;top:380px;letter-spacing:0.03px;">Поиск:</div>
<div class="abs inp" style="left:322px;top:377px;width:599px;height:18px"></div>
<div class="abs t " style="left:324.7px;top:380px;letter-spacing:-0.09px;">Матри</div>
<div class="abs" style="left:357px;top:380px;width:1px;height:12px;background:#000;"></div>
<div class="abs t " style="left:283.9px;top:402px;letter-spacing:0.75px;">в</div>
<div class="abs sel" style="left:294px;top:398px;width:191px;height:19px"><b></b></div>
<div class="abs t " style="left:299.0px;top:402px;letter-spacing:-0.1px;">(Все типы)</div>
<div class="abs sel" style="left:489px;top:398px;width:87px;height:19px"><b></b></div>
<div class="abs t " style="left:493.8px;top:402px;letter-spacing:-0.46px;">В Имени</div>
<div class="abs cb" style="left:584px;top:398px"></div>
<div class="abs t " style="left:602.4px;top:402px;letter-spacing:-0.16px;">Включая мертвые</div>
<div class="abs btn" style="left:698px;top:398px;width:57px;height:20px"></div>
<div class="abs t " style="left:707.6px;top:402px;letter-spacing:0.15px;">Поиск!</div>
<div class="abs" style="left:187px;top:465px;width:947px;height:262px;box-sizing:border-box;border:1px solid #000;border-bottom:0;background:#f0f3f6"></div>
<div class="abs thd" style="left:188px;top:466px;width:945px;height:23px"></div>
<div class="abs" style="left:188px;top:489px;width:945px;height:1px;background:#000;"></div>
<div class="abs" style="left:188px;top:540px;width:945px;height:1px;background:#000;"></div>
<div class="abs" style="left:188px;top:591px;width:945px;height:1px;background:#000;"></div>
<div class="abs" style="left:188px;top:642px;width:945px;height:1px;background:#000;"></div>
<div class="abs" style="left:188px;top:693px;width:945px;height:1px;background:#000;"></div>
<div class="abs" style="left:238px;top:466px;width:1px;height:261px;background:#000;"></div>
<div class="abs" style="left:717px;top:466px;width:1px;height:261px;background:#000;"></div>
<div class="abs" style="left:771px;top:466px;width:1px;height:261px;background:#000;"></div>
<div class="abs" style="left:815px;top:466px;width:1px;height:261px;background:#000;"></div>
<div class="abs" style="left:881px;top:466px;width:1px;height:261px;background:#000;"></div>
<div class="abs" style="left:934px;top:466px;width:1px;height:261px;background:#000;"></div>
<div class="abs" style="left:993px;top:466px;width:1px;height:261px;background:#000;"></div>
<div class="abs" style="left:1054px;top:466px;width:1px;height:261px;background:#000;"></div>
<div class="abs t " style="left:202.9px;top:472px;letter-spacing:-0.75px;font-weight:bold;color:#fff;">Тип</div>
<div class="abs t " style="left:243.2px;top:472px;font-weight:bold;color:#fff;text-decoration:underline;">Название</div>
<div class="abs t " style="left:721.4px;top:472px;font-weight:bold;color:#fff;text-decoration:underline;">Файлы</div>
<div class="abs t " style="left:775.4px;top:472px;font-weight:bold;color:#fff;text-decoration:underline;">Комм.</div>
<div class="abs t " style="left:823.4px;top:472px;font-weight:bold;color:#fff;text-decoration:underline;">Рейтинг</div>
<div class="abs t " style="left:885.4px;top:472px;letter-spacing:0.44px;font-weight:bold;color:#fff;text-decoration:underline;">Размер</div>
<div class="abs t " style="left:939.3px;top:472px;font-weight:bold;color:#fff;text-decoration:underline;">Скачали</div>
<div class="abs t " style="left:998.3px;top:472px;letter-spacing:0.69px;font-weight:bold;color:#fff;"><u>Сид</u>|<u>Лич</u></div>
<div class="abs t " style="left:1070.8px;top:472px;letter-spacing:0.57px;font-weight:bold;color:#fff;text-decoration:underline;">Раздал</div>
<svg width="0" height="0" style="position:absolute"><defs><linearGradient id="gdoc" x1="0" y1="0" x2="1" y2="1"><stop offset="0" stop-color="#fff"/><stop offset="0.5" stop-color="#fdeee4"/><stop offset="1" stop-color="#f8bc98"/></linearGradient><linearGradient id="gusr" x1="0" y1="0" x2="0.3" y2="1"><stop offset="0" stop-color="#4ca4f0"/><stop offset="1" stop-color="#cfe8fc"/></linearGradient><linearGradient id="ghd" x1="0" y1="0" x2="0" y2="1"><stop offset="0" stop-color="#9c9cf4"/><stop offset="0.28" stop-color="#5050e4"/><stop offset="0.55" stop-color="#2424d0"/><stop offset="1" stop-color="#2828c8"/></linearGradient><linearGradient id="gxv" x1="0" y1="0" x2="0" y2="1"><stop offset="0" stop-color="#cc98e0"/><stop offset="0.3" stop-color="#a850c8"/><stop offset="0.6" stop-color="#9030b0"/><stop offset="1" stop-color="#a040c0"/></linearGradient><linearGradient id="gbn" x1="0" y1="0" x2="0" y2="1"><stop offset="0" stop-color="#888888"/><stop offset="0.5" stop-color="#b4b4b4"/><stop offset="1" stop-color="#a0a0a0"/></linearGradient></defs></svg>
<svg class="abs" style="left:190px;top:493px" width="44" height="44" viewBox="0 0 44 44"><rect x="0.5" y="0.5" width="43" height="43" rx="4" fill="#ececff" stroke="#8484f0"/><rect x="4" y="4" width="36" height="36" rx="1.5" fill="url(#ghd)" stroke="#5050e0" stroke-width="0.8"/><path d="M5 22 Q14 16 22 22 T39 20" fill="none" stroke="#6868e8" stroke-width="0.6"/><g transform="translate(21.5 18) rotate(42)"><rect x="-12" y="-7.5" width="24" height="15" fill="#5a90d8"/><rect x="-12" y="-7.5" width="24" height="2.6" fill="#54585c"/><rect x="-12" y="4.9" width="24" height="2.6" fill="#54585c"/><path d="M-12 -6.2 H12 M-12 6.2 H12" stroke="#9a9ea2" stroke-width="0.8" stroke-dasharray="1.5 1.5"/><path d="M-6 -4.9 V4.9 M0 -4.9 V4.9 M6 -4.9 V4.9" stroke="#283848" stroke-width="1.2"/><path d="M-11 -4 L-7 -4 L-11 3Z M-5 -4 L-1 -4 L-5 3Z M1 -4 L5 -4 L1 3Z M7 -4 L11 -4 L7 3Z" fill="#88bcf4"/></g><text x="5.6" y="38.6" font-family="Liberation Sans, sans-serif" font-weight="bold" font-size="11.5" fill="#fff" stroke="#8c8078" stroke-width="0.7" paint-order="stroke" textLength="33" lengthAdjust="spacingAndGlyphs">HDTV</text></svg>
<div class="abs t " style="left:243.5px;top:505px;font-weight:bold;letter-spacing:-0.1px;">По прозвищу «Зверь»</div>
<div class="abs t " style="left:243.5px;top:518px;letter-spacing:-0.02px;font-style:italic;">2008-10-13 23:40:12</div>
<svg class="abs" style="left:190px;top:544px" width="44" height="44" viewBox="0 0 44 44"><rect x="0.5" y="0.5" width="43" height="43" rx="4" fill="#f8ecfa" stroke="#d4a4e0"/><rect x="4" y="4" width="36" height="36" rx="1.5" fill="url(#gxv)" stroke="#a050c0" stroke-width="0.8"/><path d="M5 26 Q16 14 26 24 T39 22" fill="none" stroke="#c890dc" stroke-width="0.6"/><circle cx="23" cy="15.5" r="8.6" fill="none" stroke="#2c78d0" stroke-width="2.2"/><circle cx="22" cy="16.5" r="7" fill="none" stroke="#c8b8e0" stroke-width="1.2" opacity="0.8"/><path d="M20.5 17.5 L26.5 11.5" stroke="#50b0f0" stroke-width="3"/><path d="M21.5 18 L27 12.5" stroke="#e0f4ff" stroke-width="1"/><circle cx="30.5" cy="24.5" r="1.2" fill="#60b0f0"/><text x="6.8" y="30.2" font-family="Liberation Sans, sans-serif" font-weight="bold" font-size="9.5" fill="#fff" stroke="#807880" stroke-width="0.7" paint-order="stroke" textLength="22.5" lengthAdjust="spacingAndGlyphs">XviD</text><text x="17.2" y="39.2" font-family="Liberation Sans, sans-serif" font-weight="bold" font-size="9.5" fill="#fff" stroke="#807880" stroke-width="0.7" paint-order="stroke" textLength="21" lengthAdjust="spacingAndGlyphs">DivX</text></svg>
<div class="abs t " style="left:243.5px;top:556px;font-weight:bold;letter-spacing:-0.1px;">Юрьев день</div>
<div class="abs t " style="left:243.5px;top:569px;letter-spacing:-0.02px;font-style:italic;">2008-10-13 23:25:31</div>
<svg class="abs" style="left:190px;top:595px" width="44" height="44" viewBox="0 0 44 44"><rect x="0.5" y="0.5" width="43" height="43" rx="4" fill="#f8ecfa" stroke="#d4a4e0"/><rect x="4" y="4" width="36" height="36" rx="1.5" fill="url(#gxv)" stroke="#a050c0" stroke-width="0.8"/><path d="M5 26 Q16 14 26 24 T39 22" fill="none" stroke="#c890dc" stroke-width="0.6"/><circle cx="23" cy="15.5" r="8.6" fill="none" stroke="#2c78d0" stroke-width="2.2"/><circle cx="22" cy="16.5" r="7" fill="none" stroke="#c8b8e0" stroke-width="1.2" opacity="0.8"/><path d="M20.5 17.5 L26.5 11.5" stroke="#50b0f0" stroke-width="3"/><path d="M21.5 18 L27 12.5" stroke="#e0f4ff" stroke-width="1"/><circle cx="30.5" cy="24.5" r="1.2" fill="#60b0f0"/><text x="6.8" y="30.2" font-family="Liberation Sans, sans-serif" font-weight="bold" font-size="9.5" fill="#fff" stroke="#807880" stroke-width="0.7" paint-order="stroke" textLength="22.5" lengthAdjust="spacingAndGlyphs">XviD</text><text x="17.2" y="39.2" font-family="Liberation Sans, sans-serif" font-weight="bold" font-size="9.5" fill="#fff" stroke="#807880" stroke-width="0.7" paint-order="stroke" textLength="21" lengthAdjust="spacingAndGlyphs">DivX</text></svg>
<div class="abs t " style="left:243.5px;top:607px;font-weight:bold;letter-spacing:-0.1px;">Остаться в живых</div>
<div class="abs t " style="left:243.5px;top:620px;letter-spacing:-0.02px;font-style:italic;">2008-10-13 23:16:46</div>
<svg class="abs" style="left:190px;top:646px" width="44" height="44" viewBox="0 0 44 44"><rect x="0.5" y="0.5" width="43" height="43" rx="4" fill="#ececff" stroke="#8484f0"/><rect x="4" y="4" width="36" height="36" rx="1.5" fill="url(#ghd)" stroke="#5050e0" stroke-width="0.8"/><path d="M5 22 Q14 16 22 22 T39 20" fill="none" stroke="#6868e8" stroke-width="0.6"/><g transform="translate(21.5 18) rotate(42)"><rect x="-12" y="-7.5" width="24" height="15" fill="#5a90d8"/><rect x="-12" y="-7.5" width="24" height="2.6" fill="#54585c"/><rect x="-12" y="4.9" width="24" height="2.6" fill="#54585c"/><path d="M-12 -6.2 H12 M-12 6.2 H12" stroke="#9a9ea2" stroke-width="0.8" stroke-dasharray="1.5 1.5"/><path d="M-6 -4.9 V4.9 M0 -4.9 V4.9 M6 -4.9 V4.9" stroke="#283848" stroke-width="1.2"/><path d="M-11 -4 L-7 -4 L-11 3Z M-5 -4 L-1 -4 L-5 3Z M1 -4 L5 -4 L1 3Z M7 -4 L11 -4 L7 3Z" fill="#88bcf4"/></g><text x="5.6" y="38.6" font-family="Liberation Sans, sans-serif" font-weight="bold" font-size="11.5" fill="#fff" stroke="#8c8078" stroke-width="0.7" paint-order="stroke" textLength="33" lengthAdjust="spacingAndGlyphs">HDTV</text></svg>
<div class="abs t " style="left:243.5px;top:658px;letter-spacing:0.13px;font-weight:bold;">Рассвет мертвецов/Dawn of the Dead ~ 2004 ~ HDTVRip</div>
<div class="abs t " style="left:243.5px;top:671px;letter-spacing:-0.02px;font-style:italic;">2008-10-13 23:02:17</div>
<svg class="abs" style="left:190px;top:697px" width="44" height="44" viewBox="0 0 44 44"><rect x="0.5" y="0.5" width="43" height="43" rx="4" fill="#f6f6f6" stroke="#cccccc"/><rect x="4" y="4" width="36" height="36" rx="1.5" fill="url(#gbn)" stroke="#909090" stroke-width="0.8"/><ellipse cx="21.5" cy="25" rx="12.5" ry="4.6" fill="#f4f0e0" stroke="#d8d0a8" stroke-width="0.8"/><path d="M9 25 V20 Q21.5 27 34 20 V25 Q21.5 32 9 25Z" fill="#f0ecd8" stroke="#d0c8a0" stroke-width="0.6"/><ellipse cx="21.5" cy="20" rx="12.5" ry="4.4" fill="#f8f8f8" stroke="#c8c8c8" stroke-width="0.8"/><path d="M11.5 20 Q11 13 15 9 Q15.4 5.6 17.4 3.4 Q17.6 8 19.6 10 Q21 11.6 21.6 13 Q22.4 9.8 24.6 8.6 Q25 6.6 26.6 6 Q26.4 9.4 28.2 11.4 Q29.4 11.2 30 10.6 Q32.6 15 31.4 20 Q21.5 24.4 11.5 20Z" fill="#f88c18"/><path d="M15 18 Q15.4 12.6 17.4 9.8 Q18 13 19.8 14.6 Q21 16.6 21 19 Z M23 18.6 Q23.2 14.6 25.6 11.6 Q26 14.6 27.8 16 Q28.8 17.6 28.4 19.2Z" fill="#ffdc28"/><path d="M11 26.4 Q21.5 31 33 26.4" fill="none" stroke="#e88c30" stroke-width="1.4" stroke-dasharray="2 1.2"/></svg>
<div class="abs t " style="left:243.5px;top:709px;letter-spacing:0.43px;font-weight:bold;">Завет</div>
<div class="abs t " style="left:243.5px;top:722px;letter-spacing:-0.02px;font-style:italic;">2008-10-13 22:50:55</div>
<div class="abs t" style="left:718px;width:47px;text-align:right;top:509px;font-weight:bold">4</div>
<div class="abs t" style="left:773px;width:36px;text-align:right;top:509px;font-weight:bold">0</div>
<div class="abs t " style="left:841.4px;top:509px;letter-spacing:0.43px;">---</div>
<div class="abs t" style="left:882px;width:52px;text-align:center;top:503px">1.89</div>
<div class="abs t" style="left:882px;width:52px;text-align:center;top:516px">GB</div>
<div class="abs t" style="left:935px;width:58px;text-align:center;top:503px">0</div>
<div class="abs t" style="left:935px;width:58px;text-align:center;top:516px">раз</div>
<div class="abs t" style="left:994px;width:60px;text-align:center;top:509px"><span style="color:#ff0000">0</span> | 0</div>
<div class="abs t " style="left:1066.9px;top:509px;letter-spacing:0.28px;font-weight:bold;">Alexandr</div>
<div class="abs t" style="left:718px;width:47px;text-align:right;top:560px;font-weight:bold">2</div>
<div class="abs t" style="left:773px;width:36px;text-align:right;top:560px;font-weight:bold">0</div>
<div class="abs t " style="left:841.4px;top:560px;letter-spacing:0.43px;">---</div>
<div class="abs t" style="left:882px;width:52px;text-align:center;top:554px">2.05</div>
<div class="abs t" style="left:882px;width:52px;text-align:center;top:567px">GB</div>
<div class="abs t" style="left:935px;width:58px;text-align:center;top:554px">0</div>
<div class="abs t" style="left:935px;width:58px;text-align:center;top:567px">раз</div>
<div class="abs t" style="left:994px;width:60px;text-align:center;top:560px"><b>1</b> | 0</div>
<div class="abs t " style="left:1065.8px;top:560px;font-weight:bold;">VladimirS</div>
<div class="abs t" style="left:718px;width:47px;text-align:right;top:611px;font-weight:bold">9</div>
<div class="abs t" style="left:773px;width:36px;text-align:right;top:611px;font-weight:bold">0</div>
<div class="abs t " style="left:841.4px;top:611px;letter-spacing:0.43px;">---</div>
<div class="abs t" style="left:882px;width:52px;text-align:center;top:605px">1.37</div>
<div class="abs t" style="left:882px;width:52px;text-align:center;top:618px">GB</div>
<div class="abs t" style="left:935px;width:58px;text-align:center;top:605px">2</div>
<div class="abs t" style="left:935px;width:58px;text-align:center;top:618px">раз</div>
<div class="abs t" style="left:994px;width:60px;text-align:center;top:611px"><span style="color:#ff0000">0</span> | <b>1</b></div>
<div class="abs t " style="left:1069.6px;top:611px;letter-spacing:0.21px;font-weight:bold;">t0tal1ty</div>
<div class="abs t" style="left:718px;width:47px;text-align:right;top:662px;font-weight:bold">10</div>
<div class="abs t" style="left:773px;width:36px;text-align:right;top:662px;font-weight:bold">5</div>
<div class="abs t " style="left:841.4px;top:662px;letter-spacing:0.43px;">---</div>
<div class="abs t" style="left:882px;width:52px;text-align:center;top:656px">8.29</div>
<div class="abs t" style="left:882px;width:52px;text-align:center;top:669px">GB</div>
<div class="abs t" style="left:935px;width:58px;text-align:center;top:656px">0</div>
<div class="abs t" style="left:935px;width:58px;text-align:center;top:669px">раз</div>
<div class="abs t" style="left:994px;width:60px;text-align:center;top:662px"><span style="color:#ff0000">0</span> | <b>3</b></div>
<div class="abs t " style="left:1069.6px;top:662px;letter-spacing:0.21px;font-weight:bold;">t0tal1ty</div>
<div class="abs t" style="left:718px;width:47px;text-align:right;top:713px;font-weight:bold">1</div>
<div class="abs t" style="left:773px;width:36px;text-align:right;top:713px;font-weight:bold">2</div>
<div class="abs t " style="left:841.4px;top:713px;letter-spacing:0.43px;">---</div>
<div class="abs t" style="left:882px;width:52px;text-align:center;top:707px">2.05</div>
<div class="abs t" style="left:882px;width:52px;text-align:center;top:720px">GB</div>
<div class="abs t" style="left:935px;width:58px;text-align:center;top:707px">0</div>
<div class="abs t" style="left:935px;width:58px;text-align:center;top:720px">раз</div>
<div class="abs t" style="left:994px;width:60px;text-align:center;top:713px"><span style="color:#ff0000">0</span> | 0</div>
<div class="abs t " style="left:1071.2px;top:713px;letter-spacing:0.06px;font-weight:bold;">Sapotuf</div>
<svg class="abs" style="left:574px;top:653px" width="14" height="14" viewBox="0 0 14 14"><circle cx="7" cy="7" r="5.8" fill="#fff0c0" stroke="#ec7c10" stroke-width="1.4"/><circle cx="7" cy="7" r="4" fill="#e8a62c"/></svg>
<svg class="abs" style="left:592px;top:652px" width="15" height="16" viewBox="0 0 15 16"><path d="M1 2 L3 0.6 H14.4 V13.8 L12.6 15.4 H1Z" fill="#eef2fa" stroke="#8c9cc4" stroke-width="0.9"/><path d="M12.6 2 V15.2 M3 0.8 L1.2 2.2 H12.6 L14.2 0.8" fill="none" stroke="#a8b4d0" stroke-width="0.7"/><path d="M4.6 1.2 H9.8 V12 L7.2 9.8 L4.6 12Z" fill="#2c80e0" stroke="#1c5cb0" stroke-width="0.5"/></svg>
<svg class="abs" style="left:612px;top:652px" width="16" height="16" viewBox="0 0 16 16"><path d="M5 1 H11 V7 H15 L8 15 L1 7 H5Z" fill="#48c030" stroke="#207810" stroke-width="0.9"/><path d="M6 2 H8 V8 H4.5" fill="none" stroke="#a0f080" stroke-width="1"/></svg>
<svg class="abs" style="left:631px;top:652px" width="16" height="16" viewBox="0 0 16 16"><path d="M1.5 14.5 L3 10 L11.5 1.5 L14.5 4.5 L6 13Z" fill="#f8c040" stroke="#c07808" stroke-width="0.9"/><path d="M1.5 14.5 L3 10 L6 13Z" fill="#f0d8b0" stroke="#806030" stroke-width="0.6"/><path d="M10.5 2.5 L13.5 5.5" stroke="#e86060" stroke-width="2.2"/></svg>
<svg class="abs" style="left:282px;top:703px" width="15" height="16" viewBox="0 0 15 16"><path d="M1 2 L3 0.6 H14.4 V13.8 L12.6 15.4 H1Z" fill="#eef2fa" stroke="#8c9cc4" stroke-width="0.9"/><path d="M12.6 2 V15.2 M3 0.8 L1.2 2.2 H12.6 L14.2 0.8" fill="none" stroke="#a8b4d0" stroke-width="0.7"/><path d="M4.6 1.2 H9.8 V12 L7.2 9.8 L4.6 12Z" fill="#2c80e0" stroke="#1c5cb0" stroke-width="0.5"/></svg>
<svg class="abs" style="left:302px;top:703px" width="16" height="16" viewBox="0 0 16 16"><path d="M5 1 H11 V7 H15 L8 15 L1 7 H5Z" fill="#48c030" stroke="#207810" stroke-width="0.9"/><path d="M6 2 H8 V8 H4.5" fill="none" stroke="#a0f080" stroke-width="1"/></svg>
<svg class="abs" style="left:321px;top:703px" width="16" height="16" viewBox="0 0 16 16"><path d="M1.5 14.5 L3 10 L11.5 1.5 L14.5 4.5 L6 13Z" fill="#f8c040" stroke="#c07808" stroke-width="0.9"/><path d="M1.5 14.5 L3 10 L6 13Z" fill="#f0d8b0" stroke="#806030" stroke-width="0.6"/><path d="M10.5 2.5 L13.5 5.5" stroke="#e86060" stroke-width="2.2"/></svg>
<div class="abs" style="left:285px;top:417px;width:617px;height:202px;box-sizing:border-box;border:1px solid #8c8c8c;background:#fff"></div>
<div class="abs t " style="left:288.2px;top:422px;letter-spacing:-0.16px;">Матрица: Трилогия (Подарочное издание «Киномания») (3 DVD) The Matrix / The Matrix Reloaded / The Matrix Revolutions</div>
<div class="abs t " style="left:288.2px;top:442px;letter-spacing:-0.08px;">Остров Теры Патрик - Анальная Лихорадка</div>
<div class="abs t " style="left:288.2px;top:462px;letter-spacing:-0.12px;">Игры Патриотов / Patriot Games/ 1992</div>
<div class="abs t " style="left:288.2px;top:482px;letter-spacing:-0.12px;">Секс в большом городе / Sex and the City: The Movie (Майкл Патрик Кинг) [2008 г., Комедия, мелодрама, TeleSynch]</div>
<div class="abs t " style="left:288.2px;top:502px;letter-spacing:0.06px;">Патриоты</div>
<div class="abs t " style="left:288.2px;top:522px;letter-spacing:-0.13px;">Матрица: Революция / The Matrix Revolutions/ 2003/ DVD9</div>
<div class="abs t " style="left:288.2px;top:542px;letter-spacing:-0.14px;">Матрица: Перезагрузка/ The Matrix Reloaded/2000/ DVD9</div>
<div class="abs t " style="left:288.2px;top:562px;letter-spacing:-0.19px;">Матрица Революция</div>
<div class="abs t " style="left:288.2px;top:582px;letter-spacing:-0.02px;">Патриот/ (The Patriot) /2000 / WP</div>
<div class="abs t " style="left:288.2px;top:602px;letter-spacing:-0.15px;">Матрица / The Matrix / 1999 / DVD-9 /</div>
<div class="abs" style="left:1148px;top:178px;width:15px;height:548px;background:#98a0ab;border-left:1px solid #000;box-sizing:border-box"></div>
<div class="abs" style="left:1148px;top:178px;width:15px;height:1px;background:#000;"></div>
<div class="abs sbtn" style="left:1149px;top:179px"><i class="up"></i></div>
<div class="abs sbtn" style="left:1149px;top:711px;height:14px"><i class="dn"></i></div>
<div class="abs" style="left:1149px;top:208px;width:14px;height:136px;box-sizing:border-box;border:1px solid #7c8692;border-top-color:#e4e9ee;border-left-color:#dfe5ec;background:linear-gradient(to right,#bcc5d0,#aab4c0)"><div class="abs" style="left:3px;top:52px;width:6px;height:1px;background:#7c8692;box-shadow:0 3px 0 #7c8692,0 6px 0 #7c8692,0 1px 0 #e4e9ee,0 4px 0 #e4e9ee,0 7px 0 #e4e9ee"></div></div>
<div class="abs" style="left:4px;top:725px;width:1159px;height:1px;background:#5c646e;"></div>

<div class="abs" id="statusbar"></div>
<div class="abs" style="left:12px;top:729px;width:13px;height:13px;background:#5a82aa;border:1px solid #3c648c;box-sizing:border-box"></div>
<div class="abs" style="left:12px;top:727px;width:13px;font:italic 14px/14px 'DejaVu Sans Condensed','Liberation Sans',sans-serif;color:#fff;text-align:center;letter-spacing:-0.5px">m</div>
<svg class="abs" style="left:30px;top:727px" width="22" height="15" viewBox="0 0 22 15"><defs><linearGradient id="mlg" x1="0" y1="0" x2="0" y2="1"><stop offset="0" stop-color="#dde6ec"/><stop offset="0.5" stop-color="#9aaab6"/><stop offset="1" stop-color="#6c808e"/></linearGradient></defs><path d="M4.5 2.5 H18.5 Q20.8 2.5 20.8 4.6 V11.2 Q20.8 13.4 18.5 13.4 H6.6 Q4.5 13.4 4.5 11.2Z" fill="url(#mlg)" stroke="#141a22" stroke-width="1.4"/><path d="M5.4 3.6 L12.6 8.6 L20 3.6" fill="#e4ecf0" stroke="#46545e" stroke-width="0.7"/><path d="M5.4 12.6 L10.8 8 M20 12.6 L14.6 8" fill="none" stroke="#3c4a54" stroke-width="0.8"/><circle cx="4.8" cy="5.6" r="4.3" fill="#40a818" stroke="#2c7c10" stroke-width="0.7"/><path d="M4.8 3 V7.2 M2.8 5.6 L4.8 7.8 L6.8 5.6" fill="none" stroke="#fff" stroke-width="1.3"/></svg>
<svg class="abs" style="left:58px;top:727px" width="22" height="15" viewBox="0 0 22 15"><rect x="6.5" y="2.5" width="11" height="10" fill="#f4f6f8" stroke="#20262e" stroke-width="1"/><path d="M8.5 5.5 H15 M8.5 8 H15 M8.5 10.5 H13" stroke="#50586a" stroke-width="0.9"/><circle cx="5.2" cy="5.2" r="4" fill="#a4b8d0" stroke="#141a22" stroke-width="1.3"/><path d="M3 4 Q5 2.4 7.4 4.4" fill="none" stroke="#e8f0f8" stroke-width="1"/><path d="M12 10.5 L19 2.5 L20.5 3.8 L13.5 11.8 L11.5 12.5Z" fill="#d8c090" stroke="#20262e" stroke-width="0.7"/></svg>
<svg class="abs" style="left:86px;top:727px" width="16" height="15" viewBox="0 0 16 15"><defs><linearGradient id="abg" x1="0" y1="0" x2="1" y2="1"><stop offset="0" stop-color="#e8eef4"/><stop offset="1" stop-color="#8ca0b6"/></linearGradient></defs><rect x="2.5" y="1" width="11.5" height="13" rx="1.5" fill="url(#abg)" stroke="#10161e" stroke-width="1.5"/><path d="M0.8 3 H3.4 M0.8 5.2 H3.4 M0.8 7.4 H3.4 M0.8 9.6 H3.4 M0.8 11.8 H3.4" stroke="#161c24" stroke-width="0.8"/><rect x="12.4" y="3" width="2.2" height="2.6" fill="#d8b020"/><rect x="12.4" y="6" width="2.2" height="2.6" fill="#3868c0"/><rect x="12.4" y="9" width="2.2" height="2.6" fill="#38a038"/></svg>
<div class="abs" style="left:109px;top:727px;width:1px;height:16px;background:#98a2ae;border-right:1px solid #e0e6ec"></div>
<div class="abs ui" style="left:114px;top:729px;line-height:14px;letter-spacing:-0.5px">Done</div>
<div class="abs vs" style="left:1072px"></div><div class="abs vs" style="left:1100px"></div><div class="abs vs" style="left:1121px"></div><div class="abs vs" style="left:1147px"></div>
<svg class="abs" style="left:1074px;top:729px" width="26" height="11" viewBox="0 0 26 11"><path d="M0 5.5 H26" stroke="#10141a" stroke-width="3.4"/><path d="M0 5.5 H26" stroke="#eef2f6" stroke-width="1.6"/><rect x="8.5" y="1" width="9" height="9" rx="2" fill="#e8ecf0" stroke="#10141a" stroke-width="1.1"/><path d="M11.5 1.5 V9.5 M14.5 1.5 V9.5" stroke="#10141a" stroke-width="1.6"/></svg>
<svg class="abs" style="left:1104px;top:728px" width="17" height="14" viewBox="0 0 17 14"><path d="M8.5 6 V4 Q8.5 1.2 11.5 1.2 Q14.5 1.2 14.5 4 V5" fill="none" stroke="#20303c" stroke-width="2.4"/><path d="M8.5 6 V4 Q8.5 1.2 11.5 1.2 Q14.5 1.2 14.5 4 V5" fill="none" stroke="#d8ecf4" stroke-width="1"/><rect x="0.8" y="6" width="9.6" height="7" fill="#7c8e9c" stroke="#20303c" stroke-width="1"/><path d="M1.5 8.2 H9.8 M1.5 10.4 H9.8" stroke="#c8d4dc" stroke-width="0.9"/></svg>
<svg class="abs" style="left:1127px;top:726px" width="17" height="17" viewBox="0 0 17 17"><defs><radialGradient id="ffg" cx="0.5" cy="0.4" r="0.6"><stop offset="0" stop-color="#58a0e8"/><stop offset="1" stop-color="#1848a8"/></radialGradient></defs><circle cx="8.5" cy="8.5" r="7.6" fill="#f08818"/><circle cx="9.4" cy="7.4" r="5.2" fill="url(#ffg)"/><path d="M1.2 6 Q1 2.5 3.5 1.5 Q3.5 3.5 5.5 4 Q4 6.5 5.5 9 Q7 11.5 10 11 Q13 10.5 14 8 Q15.5 11 13 14 Q10 17 6 15.5 Q1.5 13.5 1.2 6Z" fill="#f09020"/><path d="M3 12 Q6 16 11 14.5 Q7.5 15 5.2 12.8Z" fill="#e05810"/><path d="M7 6.2 Q8.5 7 10 6.4 Q9.5 8.2 7.5 8 Z" fill="#f8c850"/></svg>
<svg class="abs" style="left:1149px;top:730px" width="13" height="13" viewBox="0 0 13 13"><path d="M12.5 1 L1 12.5 M12.5 5 L5 12.5 M12.5 9 L9 12.5" stroke="#8c96a2" stroke-width="1.1"/><path d="M12.5 2.2 L2.2 12.5 M12.5 6.2 L6.2 12.5 M12.5 10.2 L10.2 12.5" stroke="#f0f3f6" stroke-width="1"/></svg>

<div class="abs" id="frameB0"></div>
<div class="abs" id="frameB1"></div>
</div>
</body>
</html>
